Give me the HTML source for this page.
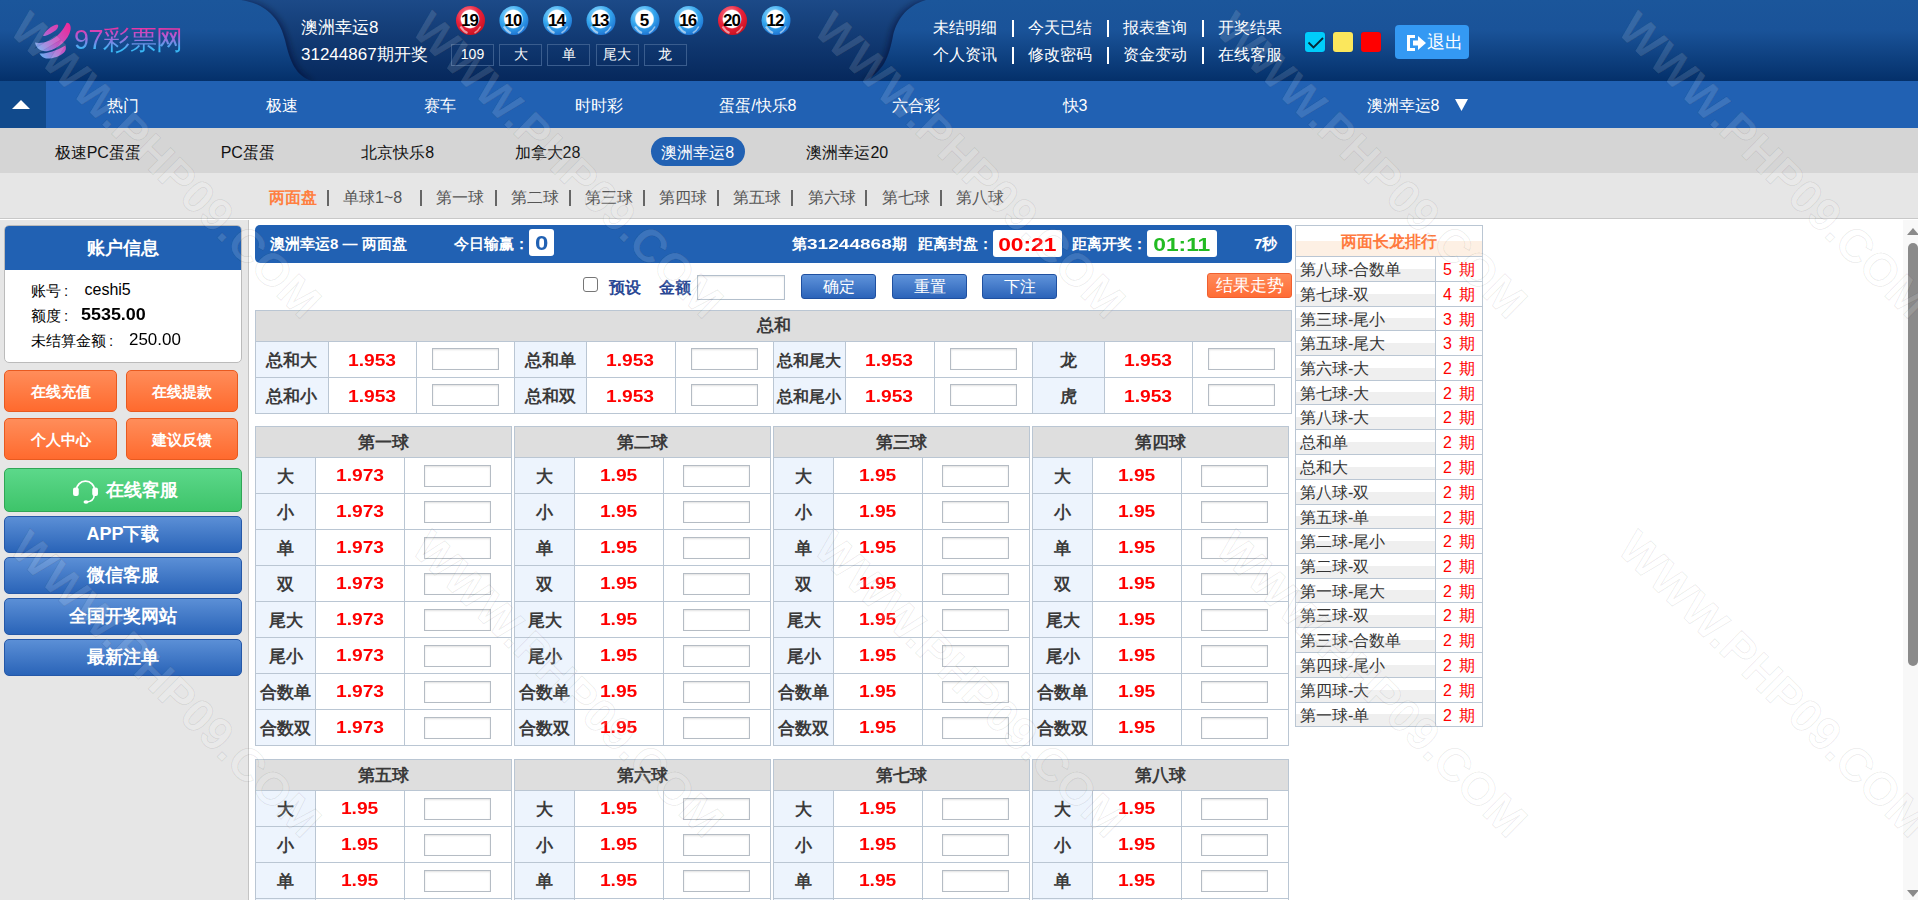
<!DOCTYPE html><html><head><meta charset="utf-8"><style>

*{box-sizing:border-box;margin:0;padding:0}
html,body{width:1918px;height:900px;overflow:hidden;background:#fff;font-family:"Liberation Sans",sans-serif;}
.a{position:absolute;white-space:nowrap}
#hdr{position:absolute;left:0;top:0;width:1918px;height:81px}
#nav{position:absolute;left:0;top:81px;width:1918px;height:47px;background:#2161b3}
#nav .up{position:absolute;left:0;top:0;width:46px;height:47px;background:#114a8c}
.nv{position:absolute;top:1px;height:47px;line-height:47px;color:#fff;font-size:16px;transform:translateX(-50%)}
#sub{position:absolute;left:0;top:128px;width:1918px;height:45px;background:#d5d5d5}
.sb{position:absolute;top:2px;height:45px;line-height:45px;color:#111;font-size:16px;transform:translateX(-50%)}
#tab{position:absolute;left:0;top:173px;width:1918px;height:46px;background:#e6e6e6;border-bottom:1px solid #c8c8c8}
.tb{position:absolute;top:1px;height:46px;line-height:48px;color:#555;font-size:16px}
#side{position:absolute;left:0;top:220px;width:249px;height:680px;background:#e6e6e6;border-right:1px solid #c4c4c4}
#main{position:absolute;left:249px;top:220px;width:1669px;height:680px;background:#fff}

</style></head><body>
<div id="hdr"><svg width="1918" height="81" viewBox="0 0 1918 81">
<defs>
<linearGradient id="gd" x1="0" y1="0" x2="0" y2="1"><stop offset="0" stop-color="#1c4a88"/><stop offset="1" stop-color="#06285c"/></linearGradient>
<linearGradient id="gl" x1="0" y1="0" x2="0" y2="1"><stop offset="0" stop-color="#1b569b"/><stop offset="0.37" stop-color="#1a5399"/><stop offset="1" stop-color="#04306a"/></linearGradient>
<linearGradient id="logo" x1="0" y1="0" x2="0" y2="1"><stop offset="0" stop-color="#f0309a"/><stop offset="0.5" stop-color="#c05ad0"/><stop offset="1" stop-color="#3ab8f5"/></linearGradient>
<linearGradient id="swirl" gradientUnits="userSpaceOnUse" x1="35" y1="52" x2="70" y2="26"><stop offset="0" stop-color="#62b6f6"/><stop offset="0.5" stop-color="#c05ac8"/><stop offset="1" stop-color="#ee2a98"/></linearGradient>
</defs>
<rect width="1918" height="81" fill="url(#gd)"/>
<filter id="blr" x="-20%" y="-20%" width="140%" height="140%"><feGaussianBlur stdDeviation="3"/></filter>
<path d="M0 0 L241 0 C268 4 280 20 285 40 C290 62 296 76 312 81 L0 81 Z" fill="rgba(0,10,40,.45)" filter="url(#blr)" transform="translate(3,0)"/>
<path d="M1918 0 L926 0 C905 6 896 22 893 36 C889 56 884 72 864 81 L1918 81 Z" fill="rgba(0,10,40,.45)" filter="url(#blr)" transform="translate(-3,0)"/>
<path d="M0 0 L241 0 C268 4 280 20 285 40 C290 62 296 76 312 81 L0 81 Z" fill="url(#gl)"/>
<path d="M1918 0 L926 0 C905 6 896 22 893 36 C889 56 884 72 864 81 L1918 81 Z" fill="url(#gl)"/>

<g>
<path d="M43 36 C44 32 52 25 57 24.5 C59 24.5 58.5 28 55.5 30.5 C51 33.5 46 36.5 43 36 Z" fill="url(#swirl)"/>
<path d="M35 42.5 C40 44 52 42 60 33 C63 30 65 26 66.5 23 C69 22 71.5 26 70.5 30 C68.5 40 58 49 48 51 C41 52.5 36 48 35 42.5 Z" fill="url(#swirl)"/>
<path d="M39.5 53.5 C46 54 56 51 65.5 45.5 C66.5 49 65.5 51 64 52.5 C60 56.5 52 59 46 58.5 C43 58 41 56 39.5 53.5 Z" fill="url(#swirl)"/>
</g>
</svg>
<div class="a" style="left:74px;top:23px;height:34px;font-size:27px;line-height:34px;letter-spacing:-0.5px;font-weight:300;background:linear-gradient(#f22f9b 0,#f22f9b 4px,#b55ad2 13px,#3ab8f6 26px);-webkit-background-clip:text;background-clip:text;color:transparent">97彩票网</div>
<div class="a" style="left:301px;top:17px;font-size:17px;line-height:22px;color:#fff">澳洲幸运8</div>
<div class="a" style="left:301px;top:44px;font-size:17px;line-height:22px;color:#fff">31244867期开奖</div>
<svg class="a" style="left:0;top:0" width="900" height="45"><defs><radialGradient id="br" cx="0.4" cy="0.3" r="0.75"><stop offset="0" stop-color="#ff8a9a"/><stop offset="0.55" stop-color="#e8203a"/><stop offset="1" stop-color="#c8101c"/></radialGradient><radialGradient id="bb" cx="0.4" cy="0.3" r="0.75"><stop offset="0" stop-color="#a8e4ff"/><stop offset="0.55" stop-color="#34a6ee"/><stop offset="1" stop-color="#1c6fd0"/></radialGradient><radialGradient id="bw" cx="0.5" cy="0.5" r="0.5"><stop offset="0.86" stop-color="#fff"/><stop offset="1" stop-color="#fff" stop-opacity="0"/></radialGradient></defs>
<circle cx="470.5" cy="20.5" r="14.5" fill="url(#br)"/>
<circle cx="470.0" cy="19.0" r="10" fill="url(#bw)"/>
<path d="M460.5 26.5 Q463.5 31.5 467.5 33.0" stroke="rgba(255,255,255,.55)" stroke-width="2.2" fill="none"/>
<path d="M480.5 26.5 Q478.5 30.5 474.5 33.0" stroke="rgba(255,255,255,.5)" stroke-width="1.6" fill="none"/>
<circle cx="513.9" cy="20.5" r="14.5" fill="url(#bb)"/>
<circle cx="513.4" cy="19.0" r="10" fill="url(#bw)"/>
<path d="M503.9 26.5 Q506.9 31.5 510.9 33.0" stroke="rgba(255,255,255,.55)" stroke-width="2.2" fill="none"/>
<path d="M523.9 26.5 Q521.9 30.5 517.9 33.0" stroke="rgba(255,255,255,.5)" stroke-width="1.6" fill="none"/>
<circle cx="557.5" cy="20.5" r="14.5" fill="url(#bb)"/>
<circle cx="557.0" cy="19.0" r="10" fill="url(#bw)"/>
<path d="M547.5 26.5 Q550.5 31.5 554.5 33.0" stroke="rgba(255,255,255,.55)" stroke-width="2.2" fill="none"/>
<path d="M567.5 26.5 Q565.5 30.5 561.5 33.0" stroke="rgba(255,255,255,.5)" stroke-width="1.6" fill="none"/>
<circle cx="601" cy="20.5" r="14.5" fill="url(#bb)"/>
<circle cx="600.5" cy="19.0" r="10" fill="url(#bw)"/>
<path d="M591 26.5 Q594 31.5 598 33.0" stroke="rgba(255,255,255,.55)" stroke-width="2.2" fill="none"/>
<path d="M611 26.5 Q609 30.5 605 33.0" stroke="rgba(255,255,255,.5)" stroke-width="1.6" fill="none"/>
<circle cx="645" cy="20.5" r="14.5" fill="url(#bb)"/>
<circle cx="644.5" cy="19.0" r="10" fill="url(#bw)"/>
<path d="M635 26.5 Q638 31.5 642 33.0" stroke="rgba(255,255,255,.55)" stroke-width="2.2" fill="none"/>
<path d="M655 26.5 Q653 30.5 649 33.0" stroke="rgba(255,255,255,.5)" stroke-width="1.6" fill="none"/>
<circle cx="688.8" cy="20.5" r="14.5" fill="url(#bb)"/>
<circle cx="688.3" cy="19.0" r="10" fill="url(#bw)"/>
<path d="M678.8 26.5 Q681.8 31.5 685.8 33.0" stroke="rgba(255,255,255,.55)" stroke-width="2.2" fill="none"/>
<path d="M698.8 26.5 Q696.8 30.5 692.8 33.0" stroke="rgba(255,255,255,.5)" stroke-width="1.6" fill="none"/>
<circle cx="732.5" cy="20.5" r="14.5" fill="url(#br)"/>
<circle cx="732.0" cy="19.0" r="10" fill="url(#bw)"/>
<path d="M722.5 26.5 Q725.5 31.5 729.5 33.0" stroke="rgba(255,255,255,.55)" stroke-width="2.2" fill="none"/>
<path d="M742.5 26.5 Q740.5 30.5 736.5 33.0" stroke="rgba(255,255,255,.5)" stroke-width="1.6" fill="none"/>
<circle cx="776" cy="20.5" r="14.5" fill="url(#bb)"/>
<circle cx="775.5" cy="19.0" r="10" fill="url(#bw)"/>
<path d="M766 26.5 Q769 31.5 773 33.0" stroke="rgba(255,255,255,.55)" stroke-width="2.2" fill="none"/>
<path d="M786 26.5 Q784 30.5 780 33.0" stroke="rgba(255,255,255,.5)" stroke-width="1.6" fill="none"/>
</svg>
<div class="a" style="left:455.5px;top:6px;width:29px;height:29px;line-height:29px;text-align:center;font-size:17px;font-weight:bold;color:#000;letter-spacing:-1px;text-indent:-1px">19</div>
<div class="a" style="left:498.9px;top:6px;width:29px;height:29px;line-height:29px;text-align:center;font-size:17px;font-weight:bold;color:#000;letter-spacing:-1px;text-indent:-1px">10</div>
<div class="a" style="left:542.5px;top:6px;width:29px;height:29px;line-height:29px;text-align:center;font-size:17px;font-weight:bold;color:#000;letter-spacing:-1px;text-indent:-1px">14</div>
<div class="a" style="left:586.0px;top:6px;width:29px;height:29px;line-height:29px;text-align:center;font-size:17px;font-weight:bold;color:#000;letter-spacing:-1px;text-indent:-1px">13</div>
<div class="a" style="left:630.0px;top:6px;width:29px;height:29px;line-height:29px;text-align:center;font-size:17px;font-weight:bold;color:#000;letter-spacing:-1px;text-indent:-1px">5</div>
<div class="a" style="left:673.8px;top:6px;width:29px;height:29px;line-height:29px;text-align:center;font-size:17px;font-weight:bold;color:#000;letter-spacing:-1px;text-indent:-1px">16</div>
<div class="a" style="left:717.5px;top:6px;width:29px;height:29px;line-height:29px;text-align:center;font-size:17px;font-weight:bold;color:#000;letter-spacing:-1px;text-indent:-1px">20</div>
<div class="a" style="left:761.0px;top:6px;width:29px;height:29px;line-height:29px;text-align:center;font-size:17px;font-weight:bold;color:#000;letter-spacing:-1px;text-indent:-1px">12</div>
<div class="a" style="left:451.0px;top:44px;width:43px;height:22px;border:1px solid #3a5d8e;color:#fff;font-size:14px;line-height:18px;text-align:center">109</div>
<div class="a" style="left:499.2px;top:44px;width:43px;height:22px;border:1px solid #3a5d8e;color:#fff;font-size:14px;line-height:18px;text-align:center">大</div>
<div class="a" style="left:547.4px;top:44px;width:43px;height:22px;border:1px solid #3a5d8e;color:#fff;font-size:14px;line-height:18px;text-align:center">单</div>
<div class="a" style="left:595.6px;top:44px;width:43px;height:22px;border:1px solid #3a5d8e;color:#fff;font-size:14px;line-height:18px;text-align:center">尾大</div>
<div class="a" style="left:643.8px;top:44px;width:43px;height:22px;border:1px solid #3a5d8e;color:#fff;font-size:14px;line-height:18px;text-align:center">龙</div>
<div class="a" style="left:933px;top:17px;font-size:16px;line-height:22px;color:#fff">未结明细</div>
<div class="a" style="left:1012px;top:20px;width:2px;height:17px;background:#fff"></div>
<div class="a" style="left:1028px;top:17px;font-size:16px;line-height:22px;color:#fff">今天已结</div>
<div class="a" style="left:1107px;top:20px;width:2px;height:17px;background:#fff"></div>
<div class="a" style="left:1123px;top:17px;font-size:16px;line-height:22px;color:#fff">报表查询</div>
<div class="a" style="left:1202px;top:20px;width:2px;height:17px;background:#fff"></div>
<div class="a" style="left:1218px;top:17px;font-size:16px;line-height:22px;color:#fff">开奖结果</div>
<div class="a" style="left:933px;top:44px;font-size:16px;line-height:22px;color:#fff">个人资讯</div>
<div class="a" style="left:1012px;top:47px;width:2px;height:17px;background:#fff"></div>
<div class="a" style="left:1028px;top:44px;font-size:16px;line-height:22px;color:#fff">修改密码</div>
<div class="a" style="left:1107px;top:47px;width:2px;height:17px;background:#fff"></div>
<div class="a" style="left:1123px;top:44px;font-size:16px;line-height:22px;color:#fff">资金变动</div>
<div class="a" style="left:1202px;top:47px;width:2px;height:17px;background:#fff"></div>
<div class="a" style="left:1218px;top:44px;font-size:16px;line-height:22px;color:#fff">在线客服</div>
<div class="a" style="left:1305px;top:32px;width:20px;height:20px;background:#00cdfb;border-radius:3px;box-shadow:0 0 1px #0a3a8a"><svg width="20" height="20" style="position:absolute;left:0;top:0"><path d="M3.5 10.5 L8.5 15.5 L18 6" stroke="#062838" stroke-width="1.8" fill="none"/></svg></div>
<div class="a" style="left:1333px;top:32px;width:20px;height:20px;background:#fbe75c;border-radius:3px;box-shadow:0 0 1px #0a3a8a"></div>
<div class="a" style="left:1361px;top:32px;width:20px;height:20px;background:#ff0000;border-radius:3px;box-shadow:0 0 1px #0a3a8a"></div>
<div class="a" style="left:1395px;top:25px;width:74px;height:34px;background:#3499f3;border-radius:4px"></div>
<svg class="a" style="left:1405px;top:33px" width="22" height="20" viewBox="0 0 22 20"><path d="M2 2 H10 V5 H5 V15 H10 V18 H2 Z" fill="#fff"/><path d="M8 7.5 H13 V3 L21 10 L13 17 V12.5 H8 Z" fill="#fff"/></svg>
<div class="a" style="left:1427px;top:31px;font-size:18px;line-height:22px;color:#fff">退出</div>
</div>
<div id="nav"><div class="up"><svg style="position:absolute;left:12px;top:19px" width="18" height="9"><path d="M0 9 L9 0 L18 9 Z" fill="#fff"/></svg></div>
<div class="nv" style="left:122.5px">热门</div>
<div class="nv" style="left:281.5px">极速</div>
<div class="nv" style="left:439.8px">赛车</div>
<div class="nv" style="left:598.8px">时时彩</div>
<div class="nv" style="left:757.8px">蛋蛋/快乐8</div>
<div class="nv" style="left:916.3px">六合彩</div>
<div class="nv" style="left:1075px">快3</div>
<div class="nv" style="left:1403px">澳洲幸运8</div>
<svg class="a" style="left:1455px;top:18px" width="13" height="12"><path d="M0 0 H13 L6.5 12 Z" fill="#fff"/></svg>
</div>
<div id="sub">
<div class="sb" style="left:97.8px">极速PC蛋蛋</div>
<div class="sb" style="left:247.8px">PC蛋蛋</div>
<div class="sb" style="left:397.8px">北京快乐8</div>
<div class="sb" style="left:547.5px">加拿大28</div>
<div class="a" style="left:651px;top:9px;width:94px;height:29px;border-radius:15px;background:#2161b3"></div>
<div class="sb" style="left:697.6px;color:#fff">澳洲幸运8</div>
<div class="sb" style="left:847.3px">澳洲幸运20</div>
</div>
<div id="tab">
<div class="tb" style="left:268.8px;color:#ff7f41;font-weight:bold">两面盘</div>
<div class="tb" style="left:343px;color:#555">单球1~8</div>
<div class="tb" style="left:436.3px;color:#555">第一球</div>
<div class="tb" style="left:510.5px;color:#555">第二球</div>
<div class="tb" style="left:585px;color:#555">第三球</div>
<div class="tb" style="left:659.3px;color:#555">第四球</div>
<div class="tb" style="left:733.3px;color:#555">第五球</div>
<div class="tb" style="left:807.5px;color:#555">第六球</div>
<div class="tb" style="left:881.8px;color:#555">第七球</div>
<div class="tb" style="left:955.5px;color:#555">第八球</div>
<div class="a" style="left:326.5px;top:17px;width:2px;height:16px;background:#666"></div>
<div class="a" style="left:420.3px;top:17px;width:2px;height:16px;background:#666"></div>
<div class="a" style="left:494.5px;top:17px;width:2px;height:16px;background:#666"></div>
<div class="a" style="left:569px;top:17px;width:2px;height:16px;background:#666"></div>
<div class="a" style="left:642.8px;top:17px;width:2px;height:16px;background:#666"></div>
<div class="a" style="left:717px;top:17px;width:2px;height:16px;background:#666"></div>
<div class="a" style="left:791px;top:17px;width:2px;height:16px;background:#666"></div>
<div class="a" style="left:865.3px;top:17px;width:2px;height:16px;background:#666"></div>
<div class="a" style="left:939.8px;top:17px;width:2px;height:16px;background:#666"></div>
</div>
<div id="side">
<div class="a" style="left:4px;top:5px;width:238px;height:138px;background:#fff;border:1px solid #bbb;border-radius:5px;overflow:hidden">
<div style="height:44px;background:#2161b3;color:#fff;font-size:18px;font-weight:bold;text-align:center;line-height:44px">账户信息</div>
<div style="position:absolute;left:26px;top:53px;font-size:15px;line-height:24.75px;color:#000">账号<br>额度<br>未结算金额</div>
<div style="position:absolute;left:59px;top:53px;font-size:15px;line-height:24.75px;color:#000">:<br>:</div>
<div style="position:absolute;left:104px;top:102.5px;font-size:15px;line-height:24.75px;color:#000">:</div>
<div style="position:absolute;left:79.5px;top:52px;font-size:16px;line-height:24.75px;color:#000">ceshi5</div>
<div style="position:absolute;left:75.5px;top:76.5px;font-size:16px;line-height:24.75px;color:#000;font-weight:bold;transform:scaleX(1.12);transform-origin:0 50%">5535.00</div>
<div style="position:absolute;left:123.5px;top:101.5px;font-size:16px;line-height:24.75px;color:#000;transform:scaleX(1.06);transform-origin:0 50%">250.00</div>
</div>
<div class="a" style="left:4px;top:150px;width:113px;height:42px;border-radius:5px;background:linear-gradient(#ff8d5a,#ff6a2e);border:1px solid #e85a20;color:#fff;font-size:15px;font-weight:bold;text-align:center;line-height:42px">在线充值</div>
<div class="a" style="left:126px;top:150px;width:112px;height:42px;border-radius:5px;background:linear-gradient(#ff8d5a,#ff6a2e);border:1px solid #e85a20;color:#fff;font-size:15px;font-weight:bold;text-align:center;line-height:42px">在线提款</div>
<div class="a" style="left:4px;top:198px;width:113px;height:42px;border-radius:5px;background:linear-gradient(#ff8d5a,#ff6a2e);border:1px solid #e85a20;color:#fff;font-size:15px;font-weight:bold;text-align:center;line-height:42px">个人中心</div>
<div class="a" style="left:126px;top:198px;width:112px;height:42px;border-radius:5px;background:linear-gradient(#ff8d5a,#ff6a2e);border:1px solid #e85a20;color:#fff;font-size:15px;font-weight:bold;text-align:center;line-height:42px">建议反馈</div>
<div class="a" style="left:4px;top:248px;width:238px;height:44px;border-radius:5px;background:linear-gradient(#5cd88a,#3ec46a);border:1px solid #2fa655;color:#fff;font-size:18px;font-weight:bold;text-align:center;line-height:42px;padding-left:37px"><svg style="position:absolute;left:67px;top:8.5px" width="27" height="26" viewBox="0 0 26 26" preserveAspectRatio="none"><path d="M4.2 12 A8.8 8.8 0 0 1 21.8 12" stroke="#fff" stroke-width="1.8" fill="none"/><rect x="1" y="9.5" width="5.5" height="8.5" rx="2" fill="#fff"/><rect x="19.5" y="9.5" width="5.5" height="8.5" rx="2" fill="#fff"/><path d="M21.5 17 Q21 23.5 14 24" stroke="#fff" stroke-width="1.6" fill="none"/><ellipse cx="13.5" cy="24" rx="2.4" ry="1.8" fill="#fff"/></svg>在线客服</div>
<div class="a" style="left:4px;top:296px;width:238px;height:37px;border-radius:5px;background:linear-gradient(#5b8fd6,#2a64b8);border:1px solid #2558a8;color:#fff;font-size:18px;font-weight:bold;text-align:center;line-height:35px">APP下载</div>
<div class="a" style="left:4px;top:337px;width:238px;height:37px;border-radius:5px;background:linear-gradient(#5b8fd6,#2a64b8);border:1px solid #2558a8;color:#fff;font-size:18px;font-weight:bold;text-align:center;line-height:35px">微信客服</div>
<div class="a" style="left:4px;top:378px;width:238px;height:37px;border-radius:5px;background:linear-gradient(#5b8fd6,#2a64b8);border:1px solid #2558a8;color:#fff;font-size:18px;font-weight:bold;text-align:center;line-height:35px">全国开奖网站</div>
<div class="a" style="left:4px;top:419px;width:238px;height:37px;border-radius:5px;background:linear-gradient(#5b8fd6,#2a64b8);border:1px solid #2558a8;color:#fff;font-size:18px;font-weight:bold;text-align:center;line-height:35px">最新注单</div>
</div>
<div id="main"></div>
<div class="a" style="left:255px;top:225px;width:1037px;height:38px;background:#2161b3;border-radius:5px"></div>
<div class="a" style="left:270px;top:233px;color:#fff;font-size:15px;font-weight:bold;line-height:22px">澳洲幸运8 — 两面盘</div>
<div class="a" style="left:454px;top:233px;color:#fff;font-size:15px;font-weight:bold;line-height:22px">今日输赢：</div>
<div class="a" style="left:529px;top:229px;width:25px;height:27px;background:#fff;border-radius:3px"></div>
<div class="a" style="left:529px;top:230px;width:25px;height:27px;line-height:27px;text-align:center;color:#2161b3;font-size:20px;font-weight:bold"><span style="display:inline-block;transform:scaleX(1.2)">0</span></div>
<div class="a" style="left:792px;top:233px;color:#fff;font-size:15px;font-weight:bold;line-height:22px">第<span style="display:inline-block;width:85px;transform:scaleX(1.27);transform-origin:0 50%">31244868</span>期</div>
<div class="a" style="left:918px;top:233px;color:#fff;font-size:15px;font-weight:bold;line-height:22px">距离封盘：</div>
<div class="a" style="left:993px;top:230px;width:69px;height:27px;background:#fff;border-radius:3px"></div>
<div class="a" style="left:993px;top:231px;width:69px;height:27px;line-height:27px;text-align:center;color:#f00;font-size:19px;font-weight:bold"><span style="display:inline-block;transform:scaleX(1.2)">00:21</span></div>
<div class="a" style="left:1072px;top:233px;color:#fff;font-size:15px;font-weight:bold;line-height:22px">距离开奖：</div>
<div class="a" style="left:1147px;top:230px;width:70px;height:27px;background:#fff;border-radius:3px"></div>
<div class="a" style="left:1147px;top:231px;width:70px;height:27px;line-height:27px;text-align:center;color:#22bb22;font-size:19px;font-weight:bold"><span style="display:inline-block;transform:scaleX(1.2)">01:11</span></div>
<div class="a" style="left:1254px;top:233px;color:#fff;font-size:15px;font-weight:bold;line-height:22px">7秒</div>
<div class="a" style="left:583px;top:277px;width:15px;height:15px;border:1px solid #767676;border-radius:3px;background:#fff"></div>
<div class="a" style="left:609px;top:277px;font-size:16px;font-weight:bold;line-height:22px;color:#2a4894">预设</div>
<div class="a" style="left:659px;top:277px;font-size:16px;font-weight:bold;line-height:22px;color:#2a4894">金额</div>
<div class="a" style="left:697px;top:275px;width:88px;height:25px;border:1px solid #b3bfcc;background:#fff;box-shadow:inset 0 1px 2px rgba(0,0,0,.1)"></div>
<div class="a" style="left:801px;top:274px;width:75px;height:25px;line-height:25px;text-align:center;background:linear-gradient(#5f93da,#2b63b9);border:1px solid #1f50a0;border-radius:3px;color:#fff;font-size:16px;line-height:24px">确定</div>
<div class="a" style="left:892px;top:274px;width:75px;height:25px;line-height:25px;text-align:center;background:linear-gradient(#5f93da,#2b63b9);border:1px solid #1f50a0;border-radius:3px;color:#fff;font-size:16px;line-height:24px">重置</div>
<div class="a" style="left:982px;top:274px;width:75px;height:25px;line-height:25px;text-align:center;background:linear-gradient(#5f93da,#2b63b9);border:1px solid #1f50a0;border-radius:3px;color:#fff;font-size:16px;line-height:24px">下注</div>
<div class="a" style="left:1207px;top:273px;width:85px;height:25px;line-height:25px;text-align:center;background:linear-gradient(#ff8b5a,#ff6c35);border:1px solid #f06030;border-radius:3px;color:#fff;font-size:17px;line-height:24px">结果走势</div>
<div class="a" style="left:255px;top:310px;width:1037px;height:104px;border:1px solid #bac6d3;background:#fff"></div>
<div class="a" style="left:256px;top:311px;width:1035px;height:30px;background:#dedede"></div>
<div class="a" style="left:255px;top:310px;width:1037px;height:31px;line-height:31px;text-align:center;color:#3a3a3a;font-size:17px;font-weight:bold">总和</div>
<div class="a" style="left:256px;top:342px;width:72px;height:71px;background:#edf4fd"></div>
<div class="a" style="left:515px;top:342px;width:71px;height:71px;background:#edf4fd"></div>
<div class="a" style="left:774px;top:342px;width:71px;height:71px;background:#edf4fd"></div>
<div class="a" style="left:1033px;top:342px;width:71px;height:71px;background:#edf4fd"></div>
<div class="a" style="left:328px;top:341px;width:1px;height:72px;background:#bac6d3"></div>
<div class="a" style="left:416px;top:341px;width:1px;height:72px;background:#bac6d3"></div>
<div class="a" style="left:514px;top:341px;width:1px;height:72px;background:#bac6d3"></div>
<div class="a" style="left:586px;top:341px;width:1px;height:72px;background:#bac6d3"></div>
<div class="a" style="left:675px;top:341px;width:1px;height:72px;background:#bac6d3"></div>
<div class="a" style="left:773px;top:341px;width:1px;height:72px;background:#bac6d3"></div>
<div class="a" style="left:845px;top:341px;width:1px;height:72px;background:#bac6d3"></div>
<div class="a" style="left:934px;top:341px;width:1px;height:72px;background:#bac6d3"></div>
<div class="a" style="left:1032px;top:341px;width:1px;height:72px;background:#bac6d3"></div>
<div class="a" style="left:1104px;top:341px;width:1px;height:72px;background:#bac6d3"></div>
<div class="a" style="left:1192px;top:341px;width:1px;height:72px;background:#bac6d3"></div>
<div class="a" style="left:255px;top:341px;width:1037px;height:1px;background:#bac6d3"></div>
<div class="a" style="left:255px;top:377px;width:1037px;height:1px;background:#bac6d3"></div>
<div class="a" style="left:255px;top:343px;width:73px;height:36px;line-height:36px;text-align:center;color:#3a3a3a;font-size:17px;font-weight:bold">总和大</div>
<div class="a" style="left:328px;top:343px;width:88px;height:36px;line-height:36px;text-align:center;color:#f00;font-size:16px;font-weight:bold"><span style="display:inline-block;transform:scaleX(1.2)">1.953</span></div>
<div class="a" style="left:432px;top:348px;width:67px;height:22px;border:1px solid #b5bcc4;background:#fff;box-shadow:inset 0 1px 2px rgba(0,0,0,.12)"></div>
<div class="a" style="left:255px;top:379px;width:73px;height:36px;line-height:36px;text-align:center;color:#3a3a3a;font-size:17px;font-weight:bold">总和小</div>
<div class="a" style="left:328px;top:379px;width:88px;height:36px;line-height:36px;text-align:center;color:#f00;font-size:16px;font-weight:bold"><span style="display:inline-block;transform:scaleX(1.2)">1.953</span></div>
<div class="a" style="left:432px;top:384px;width:67px;height:22px;border:1px solid #b5bcc4;background:#fff;box-shadow:inset 0 1px 2px rgba(0,0,0,.12)"></div>
<div class="a" style="left:514px;top:343px;width:72px;height:36px;line-height:36px;text-align:center;color:#3a3a3a;font-size:17px;font-weight:bold">总和单</div>
<div class="a" style="left:586px;top:343px;width:89px;height:36px;line-height:36px;text-align:center;color:#f00;font-size:16px;font-weight:bold"><span style="display:inline-block;transform:scaleX(1.2)">1.953</span></div>
<div class="a" style="left:691px;top:348px;width:67px;height:22px;border:1px solid #b5bcc4;background:#fff;box-shadow:inset 0 1px 2px rgba(0,0,0,.12)"></div>
<div class="a" style="left:514px;top:379px;width:72px;height:36px;line-height:36px;text-align:center;color:#3a3a3a;font-size:17px;font-weight:bold">总和双</div>
<div class="a" style="left:586px;top:379px;width:89px;height:36px;line-height:36px;text-align:center;color:#f00;font-size:16px;font-weight:bold"><span style="display:inline-block;transform:scaleX(1.2)">1.953</span></div>
<div class="a" style="left:691px;top:384px;width:67px;height:22px;border:1px solid #b5bcc4;background:#fff;box-shadow:inset 0 1px 2px rgba(0,0,0,.12)"></div>
<div class="a" style="left:773px;top:343px;width:72px;height:36px;line-height:36px;text-align:center;color:#3a3a3a;font-size:17px;font-weight:bold;font-size:16px">总和尾大</div>
<div class="a" style="left:845px;top:343px;width:89px;height:36px;line-height:36px;text-align:center;color:#f00;font-size:16px;font-weight:bold"><span style="display:inline-block;transform:scaleX(1.2)">1.953</span></div>
<div class="a" style="left:950px;top:348px;width:67px;height:22px;border:1px solid #b5bcc4;background:#fff;box-shadow:inset 0 1px 2px rgba(0,0,0,.12)"></div>
<div class="a" style="left:773px;top:379px;width:72px;height:36px;line-height:36px;text-align:center;color:#3a3a3a;font-size:17px;font-weight:bold;font-size:16px">总和尾小</div>
<div class="a" style="left:845px;top:379px;width:89px;height:36px;line-height:36px;text-align:center;color:#f00;font-size:16px;font-weight:bold"><span style="display:inline-block;transform:scaleX(1.2)">1.953</span></div>
<div class="a" style="left:950px;top:384px;width:67px;height:22px;border:1px solid #b5bcc4;background:#fff;box-shadow:inset 0 1px 2px rgba(0,0,0,.12)"></div>
<div class="a" style="left:1032px;top:343px;width:72px;height:36px;line-height:36px;text-align:center;color:#3a3a3a;font-size:17px;font-weight:bold">龙</div>
<div class="a" style="left:1104px;top:343px;width:88px;height:36px;line-height:36px;text-align:center;color:#f00;font-size:16px;font-weight:bold"><span style="display:inline-block;transform:scaleX(1.2)">1.953</span></div>
<div class="a" style="left:1208px;top:348px;width:67px;height:22px;border:1px solid #b5bcc4;background:#fff;box-shadow:inset 0 1px 2px rgba(0,0,0,.12)"></div>
<div class="a" style="left:1032px;top:379px;width:72px;height:36px;line-height:36px;text-align:center;color:#3a3a3a;font-size:17px;font-weight:bold">虎</div>
<div class="a" style="left:1104px;top:379px;width:88px;height:36px;line-height:36px;text-align:center;color:#f00;font-size:16px;font-weight:bold"><span style="display:inline-block;transform:scaleX(1.2)">1.953</span></div>
<div class="a" style="left:1208px;top:384px;width:67px;height:22px;border:1px solid #b5bcc4;background:#fff;box-shadow:inset 0 1px 2px rgba(0,0,0,.12)"></div>
<div class="a" style="left:255px;top:426px;width:257px;height:320px;border:1px solid #bac6d3;background:#fff"></div>
<div class="a" style="left:256px;top:427px;width:255px;height:31px;background:#dedede"></div>
<div class="a" style="left:255px;top:427px;width:257px;height:32px;line-height:32px;text-align:center;color:#3a3a3a;font-size:17px;font-weight:bold">第一球</div>
<div class="a" style="left:256px;top:458px;width:60px;height:287px;background:#edf4fd"></div>
<div class="a" style="left:255px;top:457px;width:257px;height:1px;background:#bac6d3"></div>
<div class="a" style="left:255px;top:458px;width:61px;height:37px;line-height:37px;text-align:center;color:#3a3a3a;font-size:17px;font-weight:bold">大</div>
<div class="a" style="left:316px;top:457px;width:88px;height:37px;line-height:37px;text-align:center;color:#f00;font-size:16px;font-weight:bold"><span style="display:inline-block;transform:scaleX(1.2)">1.973</span></div>
<div class="a" style="left:424px;top:465px;width:67px;height:22px;border:1px solid #b5bcc4;background:#fff;box-shadow:inset 0 1px 2px rgba(0,0,0,.12)"></div>
<div class="a" style="left:255px;top:493px;width:257px;height:1px;background:#bac6d3"></div>
<div class="a" style="left:255px;top:494px;width:61px;height:37px;line-height:37px;text-align:center;color:#3a3a3a;font-size:17px;font-weight:bold">小</div>
<div class="a" style="left:316px;top:493px;width:88px;height:37px;line-height:37px;text-align:center;color:#f00;font-size:16px;font-weight:bold"><span style="display:inline-block;transform:scaleX(1.2)">1.973</span></div>
<div class="a" style="left:424px;top:501px;width:67px;height:22px;border:1px solid #b5bcc4;background:#fff;box-shadow:inset 0 1px 2px rgba(0,0,0,.12)"></div>
<div class="a" style="left:255px;top:529px;width:257px;height:1px;background:#bac6d3"></div>
<div class="a" style="left:255px;top:530px;width:61px;height:37px;line-height:37px;text-align:center;color:#3a3a3a;font-size:17px;font-weight:bold">单</div>
<div class="a" style="left:316px;top:529px;width:88px;height:37px;line-height:37px;text-align:center;color:#f00;font-size:16px;font-weight:bold"><span style="display:inline-block;transform:scaleX(1.2)">1.973</span></div>
<div class="a" style="left:424px;top:537px;width:67px;height:22px;border:1px solid #b5bcc4;background:#fff;box-shadow:inset 0 1px 2px rgba(0,0,0,.12)"></div>
<div class="a" style="left:255px;top:565px;width:257px;height:1px;background:#bac6d3"></div>
<div class="a" style="left:255px;top:566px;width:61px;height:37px;line-height:37px;text-align:center;color:#3a3a3a;font-size:17px;font-weight:bold">双</div>
<div class="a" style="left:316px;top:565px;width:88px;height:37px;line-height:37px;text-align:center;color:#f00;font-size:16px;font-weight:bold"><span style="display:inline-block;transform:scaleX(1.2)">1.973</span></div>
<div class="a" style="left:424px;top:573px;width:67px;height:22px;border:1px solid #b5bcc4;background:#fff;box-shadow:inset 0 1px 2px rgba(0,0,0,.12)"></div>
<div class="a" style="left:255px;top:601px;width:257px;height:1px;background:#bac6d3"></div>
<div class="a" style="left:255px;top:602px;width:61px;height:37px;line-height:37px;text-align:center;color:#3a3a3a;font-size:17px;font-weight:bold">尾大</div>
<div class="a" style="left:316px;top:601px;width:88px;height:37px;line-height:37px;text-align:center;color:#f00;font-size:16px;font-weight:bold"><span style="display:inline-block;transform:scaleX(1.2)">1.973</span></div>
<div class="a" style="left:424px;top:609px;width:67px;height:22px;border:1px solid #b5bcc4;background:#fff;box-shadow:inset 0 1px 2px rgba(0,0,0,.12)"></div>
<div class="a" style="left:255px;top:637px;width:257px;height:1px;background:#bac6d3"></div>
<div class="a" style="left:255px;top:638px;width:61px;height:37px;line-height:37px;text-align:center;color:#3a3a3a;font-size:17px;font-weight:bold">尾小</div>
<div class="a" style="left:316px;top:637px;width:88px;height:37px;line-height:37px;text-align:center;color:#f00;font-size:16px;font-weight:bold"><span style="display:inline-block;transform:scaleX(1.2)">1.973</span></div>
<div class="a" style="left:424px;top:645px;width:67px;height:22px;border:1px solid #b5bcc4;background:#fff;box-shadow:inset 0 1px 2px rgba(0,0,0,.12)"></div>
<div class="a" style="left:255px;top:673px;width:257px;height:1px;background:#bac6d3"></div>
<div class="a" style="left:255px;top:674px;width:61px;height:37px;line-height:37px;text-align:center;color:#3a3a3a;font-size:17px;font-weight:bold">合数单</div>
<div class="a" style="left:316px;top:673px;width:88px;height:37px;line-height:37px;text-align:center;color:#f00;font-size:16px;font-weight:bold"><span style="display:inline-block;transform:scaleX(1.2)">1.973</span></div>
<div class="a" style="left:424px;top:681px;width:67px;height:22px;border:1px solid #b5bcc4;background:#fff;box-shadow:inset 0 1px 2px rgba(0,0,0,.12)"></div>
<div class="a" style="left:255px;top:709px;width:257px;height:1px;background:#bac6d3"></div>
<div class="a" style="left:255px;top:710px;width:61px;height:37px;line-height:37px;text-align:center;color:#3a3a3a;font-size:17px;font-weight:bold">合数双</div>
<div class="a" style="left:316px;top:709px;width:88px;height:37px;line-height:37px;text-align:center;color:#f00;font-size:16px;font-weight:bold"><span style="display:inline-block;transform:scaleX(1.2)">1.973</span></div>
<div class="a" style="left:424px;top:717px;width:67px;height:22px;border:1px solid #b5bcc4;background:#fff;box-shadow:inset 0 1px 2px rgba(0,0,0,.12)"></div>
<div class="a" style="left:315px;top:457px;width:1px;height:288px;background:#bac6d3"></div>
<div class="a" style="left:404px;top:457px;width:1px;height:288px;background:#bac6d3"></div>
<div class="a" style="left:514px;top:426px;width:257px;height:320px;border:1px solid #bac6d3;background:#fff"></div>
<div class="a" style="left:515px;top:427px;width:255px;height:31px;background:#dedede"></div>
<div class="a" style="left:514px;top:427px;width:257px;height:32px;line-height:32px;text-align:center;color:#3a3a3a;font-size:17px;font-weight:bold">第二球</div>
<div class="a" style="left:515px;top:458px;width:60px;height:287px;background:#edf4fd"></div>
<div class="a" style="left:514px;top:457px;width:257px;height:1px;background:#bac6d3"></div>
<div class="a" style="left:514px;top:458px;width:61px;height:37px;line-height:37px;text-align:center;color:#3a3a3a;font-size:17px;font-weight:bold">大</div>
<div class="a" style="left:575px;top:457px;width:88px;height:37px;line-height:37px;text-align:center;color:#f00;font-size:16px;font-weight:bold"><span style="display:inline-block;transform:scaleX(1.2)">1.95</span></div>
<div class="a" style="left:683px;top:465px;width:67px;height:22px;border:1px solid #b5bcc4;background:#fff;box-shadow:inset 0 1px 2px rgba(0,0,0,.12)"></div>
<div class="a" style="left:514px;top:493px;width:257px;height:1px;background:#bac6d3"></div>
<div class="a" style="left:514px;top:494px;width:61px;height:37px;line-height:37px;text-align:center;color:#3a3a3a;font-size:17px;font-weight:bold">小</div>
<div class="a" style="left:575px;top:493px;width:88px;height:37px;line-height:37px;text-align:center;color:#f00;font-size:16px;font-weight:bold"><span style="display:inline-block;transform:scaleX(1.2)">1.95</span></div>
<div class="a" style="left:683px;top:501px;width:67px;height:22px;border:1px solid #b5bcc4;background:#fff;box-shadow:inset 0 1px 2px rgba(0,0,0,.12)"></div>
<div class="a" style="left:514px;top:529px;width:257px;height:1px;background:#bac6d3"></div>
<div class="a" style="left:514px;top:530px;width:61px;height:37px;line-height:37px;text-align:center;color:#3a3a3a;font-size:17px;font-weight:bold">单</div>
<div class="a" style="left:575px;top:529px;width:88px;height:37px;line-height:37px;text-align:center;color:#f00;font-size:16px;font-weight:bold"><span style="display:inline-block;transform:scaleX(1.2)">1.95</span></div>
<div class="a" style="left:683px;top:537px;width:67px;height:22px;border:1px solid #b5bcc4;background:#fff;box-shadow:inset 0 1px 2px rgba(0,0,0,.12)"></div>
<div class="a" style="left:514px;top:565px;width:257px;height:1px;background:#bac6d3"></div>
<div class="a" style="left:514px;top:566px;width:61px;height:37px;line-height:37px;text-align:center;color:#3a3a3a;font-size:17px;font-weight:bold">双</div>
<div class="a" style="left:575px;top:565px;width:88px;height:37px;line-height:37px;text-align:center;color:#f00;font-size:16px;font-weight:bold"><span style="display:inline-block;transform:scaleX(1.2)">1.95</span></div>
<div class="a" style="left:683px;top:573px;width:67px;height:22px;border:1px solid #b5bcc4;background:#fff;box-shadow:inset 0 1px 2px rgba(0,0,0,.12)"></div>
<div class="a" style="left:514px;top:601px;width:257px;height:1px;background:#bac6d3"></div>
<div class="a" style="left:514px;top:602px;width:61px;height:37px;line-height:37px;text-align:center;color:#3a3a3a;font-size:17px;font-weight:bold">尾大</div>
<div class="a" style="left:575px;top:601px;width:88px;height:37px;line-height:37px;text-align:center;color:#f00;font-size:16px;font-weight:bold"><span style="display:inline-block;transform:scaleX(1.2)">1.95</span></div>
<div class="a" style="left:683px;top:609px;width:67px;height:22px;border:1px solid #b5bcc4;background:#fff;box-shadow:inset 0 1px 2px rgba(0,0,0,.12)"></div>
<div class="a" style="left:514px;top:637px;width:257px;height:1px;background:#bac6d3"></div>
<div class="a" style="left:514px;top:638px;width:61px;height:37px;line-height:37px;text-align:center;color:#3a3a3a;font-size:17px;font-weight:bold">尾小</div>
<div class="a" style="left:575px;top:637px;width:88px;height:37px;line-height:37px;text-align:center;color:#f00;font-size:16px;font-weight:bold"><span style="display:inline-block;transform:scaleX(1.2)">1.95</span></div>
<div class="a" style="left:683px;top:645px;width:67px;height:22px;border:1px solid #b5bcc4;background:#fff;box-shadow:inset 0 1px 2px rgba(0,0,0,.12)"></div>
<div class="a" style="left:514px;top:673px;width:257px;height:1px;background:#bac6d3"></div>
<div class="a" style="left:514px;top:674px;width:61px;height:37px;line-height:37px;text-align:center;color:#3a3a3a;font-size:17px;font-weight:bold">合数单</div>
<div class="a" style="left:575px;top:673px;width:88px;height:37px;line-height:37px;text-align:center;color:#f00;font-size:16px;font-weight:bold"><span style="display:inline-block;transform:scaleX(1.2)">1.95</span></div>
<div class="a" style="left:683px;top:681px;width:67px;height:22px;border:1px solid #b5bcc4;background:#fff;box-shadow:inset 0 1px 2px rgba(0,0,0,.12)"></div>
<div class="a" style="left:514px;top:709px;width:257px;height:1px;background:#bac6d3"></div>
<div class="a" style="left:514px;top:710px;width:61px;height:37px;line-height:37px;text-align:center;color:#3a3a3a;font-size:17px;font-weight:bold">合数双</div>
<div class="a" style="left:575px;top:709px;width:88px;height:37px;line-height:37px;text-align:center;color:#f00;font-size:16px;font-weight:bold"><span style="display:inline-block;transform:scaleX(1.2)">1.95</span></div>
<div class="a" style="left:683px;top:717px;width:67px;height:22px;border:1px solid #b5bcc4;background:#fff;box-shadow:inset 0 1px 2px rgba(0,0,0,.12)"></div>
<div class="a" style="left:574px;top:457px;width:1px;height:288px;background:#bac6d3"></div>
<div class="a" style="left:663px;top:457px;width:1px;height:288px;background:#bac6d3"></div>
<div class="a" style="left:773px;top:426px;width:257px;height:320px;border:1px solid #bac6d3;background:#fff"></div>
<div class="a" style="left:774px;top:427px;width:255px;height:31px;background:#dedede"></div>
<div class="a" style="left:773px;top:427px;width:257px;height:32px;line-height:32px;text-align:center;color:#3a3a3a;font-size:17px;font-weight:bold">第三球</div>
<div class="a" style="left:774px;top:458px;width:60px;height:287px;background:#edf4fd"></div>
<div class="a" style="left:773px;top:457px;width:257px;height:1px;background:#bac6d3"></div>
<div class="a" style="left:773px;top:458px;width:61px;height:37px;line-height:37px;text-align:center;color:#3a3a3a;font-size:17px;font-weight:bold">大</div>
<div class="a" style="left:834px;top:457px;width:88px;height:37px;line-height:37px;text-align:center;color:#f00;font-size:16px;font-weight:bold"><span style="display:inline-block;transform:scaleX(1.2)">1.95</span></div>
<div class="a" style="left:942px;top:465px;width:67px;height:22px;border:1px solid #b5bcc4;background:#fff;box-shadow:inset 0 1px 2px rgba(0,0,0,.12)"></div>
<div class="a" style="left:773px;top:493px;width:257px;height:1px;background:#bac6d3"></div>
<div class="a" style="left:773px;top:494px;width:61px;height:37px;line-height:37px;text-align:center;color:#3a3a3a;font-size:17px;font-weight:bold">小</div>
<div class="a" style="left:834px;top:493px;width:88px;height:37px;line-height:37px;text-align:center;color:#f00;font-size:16px;font-weight:bold"><span style="display:inline-block;transform:scaleX(1.2)">1.95</span></div>
<div class="a" style="left:942px;top:501px;width:67px;height:22px;border:1px solid #b5bcc4;background:#fff;box-shadow:inset 0 1px 2px rgba(0,0,0,.12)"></div>
<div class="a" style="left:773px;top:529px;width:257px;height:1px;background:#bac6d3"></div>
<div class="a" style="left:773px;top:530px;width:61px;height:37px;line-height:37px;text-align:center;color:#3a3a3a;font-size:17px;font-weight:bold">单</div>
<div class="a" style="left:834px;top:529px;width:88px;height:37px;line-height:37px;text-align:center;color:#f00;font-size:16px;font-weight:bold"><span style="display:inline-block;transform:scaleX(1.2)">1.95</span></div>
<div class="a" style="left:942px;top:537px;width:67px;height:22px;border:1px solid #b5bcc4;background:#fff;box-shadow:inset 0 1px 2px rgba(0,0,0,.12)"></div>
<div class="a" style="left:773px;top:565px;width:257px;height:1px;background:#bac6d3"></div>
<div class="a" style="left:773px;top:566px;width:61px;height:37px;line-height:37px;text-align:center;color:#3a3a3a;font-size:17px;font-weight:bold">双</div>
<div class="a" style="left:834px;top:565px;width:88px;height:37px;line-height:37px;text-align:center;color:#f00;font-size:16px;font-weight:bold"><span style="display:inline-block;transform:scaleX(1.2)">1.95</span></div>
<div class="a" style="left:942px;top:573px;width:67px;height:22px;border:1px solid #b5bcc4;background:#fff;box-shadow:inset 0 1px 2px rgba(0,0,0,.12)"></div>
<div class="a" style="left:773px;top:601px;width:257px;height:1px;background:#bac6d3"></div>
<div class="a" style="left:773px;top:602px;width:61px;height:37px;line-height:37px;text-align:center;color:#3a3a3a;font-size:17px;font-weight:bold">尾大</div>
<div class="a" style="left:834px;top:601px;width:88px;height:37px;line-height:37px;text-align:center;color:#f00;font-size:16px;font-weight:bold"><span style="display:inline-block;transform:scaleX(1.2)">1.95</span></div>
<div class="a" style="left:942px;top:609px;width:67px;height:22px;border:1px solid #b5bcc4;background:#fff;box-shadow:inset 0 1px 2px rgba(0,0,0,.12)"></div>
<div class="a" style="left:773px;top:637px;width:257px;height:1px;background:#bac6d3"></div>
<div class="a" style="left:773px;top:638px;width:61px;height:37px;line-height:37px;text-align:center;color:#3a3a3a;font-size:17px;font-weight:bold">尾小</div>
<div class="a" style="left:834px;top:637px;width:88px;height:37px;line-height:37px;text-align:center;color:#f00;font-size:16px;font-weight:bold"><span style="display:inline-block;transform:scaleX(1.2)">1.95</span></div>
<div class="a" style="left:942px;top:645px;width:67px;height:22px;border:1px solid #b5bcc4;background:#fff;box-shadow:inset 0 1px 2px rgba(0,0,0,.12)"></div>
<div class="a" style="left:773px;top:673px;width:257px;height:1px;background:#bac6d3"></div>
<div class="a" style="left:773px;top:674px;width:61px;height:37px;line-height:37px;text-align:center;color:#3a3a3a;font-size:17px;font-weight:bold">合数单</div>
<div class="a" style="left:834px;top:673px;width:88px;height:37px;line-height:37px;text-align:center;color:#f00;font-size:16px;font-weight:bold"><span style="display:inline-block;transform:scaleX(1.2)">1.95</span></div>
<div class="a" style="left:942px;top:681px;width:67px;height:22px;border:1px solid #b5bcc4;background:#fff;box-shadow:inset 0 1px 2px rgba(0,0,0,.12)"></div>
<div class="a" style="left:773px;top:709px;width:257px;height:1px;background:#bac6d3"></div>
<div class="a" style="left:773px;top:710px;width:61px;height:37px;line-height:37px;text-align:center;color:#3a3a3a;font-size:17px;font-weight:bold">合数双</div>
<div class="a" style="left:834px;top:709px;width:88px;height:37px;line-height:37px;text-align:center;color:#f00;font-size:16px;font-weight:bold"><span style="display:inline-block;transform:scaleX(1.2)">1.95</span></div>
<div class="a" style="left:942px;top:717px;width:67px;height:22px;border:1px solid #b5bcc4;background:#fff;box-shadow:inset 0 1px 2px rgba(0,0,0,.12)"></div>
<div class="a" style="left:833px;top:457px;width:1px;height:288px;background:#bac6d3"></div>
<div class="a" style="left:922px;top:457px;width:1px;height:288px;background:#bac6d3"></div>
<div class="a" style="left:1032px;top:426px;width:257px;height:320px;border:1px solid #bac6d3;background:#fff"></div>
<div class="a" style="left:1033px;top:427px;width:255px;height:31px;background:#dedede"></div>
<div class="a" style="left:1032px;top:427px;width:257px;height:32px;line-height:32px;text-align:center;color:#3a3a3a;font-size:17px;font-weight:bold">第四球</div>
<div class="a" style="left:1033px;top:458px;width:60px;height:287px;background:#edf4fd"></div>
<div class="a" style="left:1032px;top:457px;width:257px;height:1px;background:#bac6d3"></div>
<div class="a" style="left:1032px;top:458px;width:61px;height:37px;line-height:37px;text-align:center;color:#3a3a3a;font-size:17px;font-weight:bold">大</div>
<div class="a" style="left:1093px;top:457px;width:88px;height:37px;line-height:37px;text-align:center;color:#f00;font-size:16px;font-weight:bold"><span style="display:inline-block;transform:scaleX(1.2)">1.95</span></div>
<div class="a" style="left:1201px;top:465px;width:67px;height:22px;border:1px solid #b5bcc4;background:#fff;box-shadow:inset 0 1px 2px rgba(0,0,0,.12)"></div>
<div class="a" style="left:1032px;top:493px;width:257px;height:1px;background:#bac6d3"></div>
<div class="a" style="left:1032px;top:494px;width:61px;height:37px;line-height:37px;text-align:center;color:#3a3a3a;font-size:17px;font-weight:bold">小</div>
<div class="a" style="left:1093px;top:493px;width:88px;height:37px;line-height:37px;text-align:center;color:#f00;font-size:16px;font-weight:bold"><span style="display:inline-block;transform:scaleX(1.2)">1.95</span></div>
<div class="a" style="left:1201px;top:501px;width:67px;height:22px;border:1px solid #b5bcc4;background:#fff;box-shadow:inset 0 1px 2px rgba(0,0,0,.12)"></div>
<div class="a" style="left:1032px;top:529px;width:257px;height:1px;background:#bac6d3"></div>
<div class="a" style="left:1032px;top:530px;width:61px;height:37px;line-height:37px;text-align:center;color:#3a3a3a;font-size:17px;font-weight:bold">单</div>
<div class="a" style="left:1093px;top:529px;width:88px;height:37px;line-height:37px;text-align:center;color:#f00;font-size:16px;font-weight:bold"><span style="display:inline-block;transform:scaleX(1.2)">1.95</span></div>
<div class="a" style="left:1201px;top:537px;width:67px;height:22px;border:1px solid #b5bcc4;background:#fff;box-shadow:inset 0 1px 2px rgba(0,0,0,.12)"></div>
<div class="a" style="left:1032px;top:565px;width:257px;height:1px;background:#bac6d3"></div>
<div class="a" style="left:1032px;top:566px;width:61px;height:37px;line-height:37px;text-align:center;color:#3a3a3a;font-size:17px;font-weight:bold">双</div>
<div class="a" style="left:1093px;top:565px;width:88px;height:37px;line-height:37px;text-align:center;color:#f00;font-size:16px;font-weight:bold"><span style="display:inline-block;transform:scaleX(1.2)">1.95</span></div>
<div class="a" style="left:1201px;top:573px;width:67px;height:22px;border:1px solid #b5bcc4;background:#fff;box-shadow:inset 0 1px 2px rgba(0,0,0,.12)"></div>
<div class="a" style="left:1032px;top:601px;width:257px;height:1px;background:#bac6d3"></div>
<div class="a" style="left:1032px;top:602px;width:61px;height:37px;line-height:37px;text-align:center;color:#3a3a3a;font-size:17px;font-weight:bold">尾大</div>
<div class="a" style="left:1093px;top:601px;width:88px;height:37px;line-height:37px;text-align:center;color:#f00;font-size:16px;font-weight:bold"><span style="display:inline-block;transform:scaleX(1.2)">1.95</span></div>
<div class="a" style="left:1201px;top:609px;width:67px;height:22px;border:1px solid #b5bcc4;background:#fff;box-shadow:inset 0 1px 2px rgba(0,0,0,.12)"></div>
<div class="a" style="left:1032px;top:637px;width:257px;height:1px;background:#bac6d3"></div>
<div class="a" style="left:1032px;top:638px;width:61px;height:37px;line-height:37px;text-align:center;color:#3a3a3a;font-size:17px;font-weight:bold">尾小</div>
<div class="a" style="left:1093px;top:637px;width:88px;height:37px;line-height:37px;text-align:center;color:#f00;font-size:16px;font-weight:bold"><span style="display:inline-block;transform:scaleX(1.2)">1.95</span></div>
<div class="a" style="left:1201px;top:645px;width:67px;height:22px;border:1px solid #b5bcc4;background:#fff;box-shadow:inset 0 1px 2px rgba(0,0,0,.12)"></div>
<div class="a" style="left:1032px;top:673px;width:257px;height:1px;background:#bac6d3"></div>
<div class="a" style="left:1032px;top:674px;width:61px;height:37px;line-height:37px;text-align:center;color:#3a3a3a;font-size:17px;font-weight:bold">合数单</div>
<div class="a" style="left:1093px;top:673px;width:88px;height:37px;line-height:37px;text-align:center;color:#f00;font-size:16px;font-weight:bold"><span style="display:inline-block;transform:scaleX(1.2)">1.95</span></div>
<div class="a" style="left:1201px;top:681px;width:67px;height:22px;border:1px solid #b5bcc4;background:#fff;box-shadow:inset 0 1px 2px rgba(0,0,0,.12)"></div>
<div class="a" style="left:1032px;top:709px;width:257px;height:1px;background:#bac6d3"></div>
<div class="a" style="left:1032px;top:710px;width:61px;height:37px;line-height:37px;text-align:center;color:#3a3a3a;font-size:17px;font-weight:bold">合数双</div>
<div class="a" style="left:1093px;top:709px;width:88px;height:37px;line-height:37px;text-align:center;color:#f00;font-size:16px;font-weight:bold"><span style="display:inline-block;transform:scaleX(1.2)">1.95</span></div>
<div class="a" style="left:1201px;top:717px;width:67px;height:22px;border:1px solid #b5bcc4;background:#fff;box-shadow:inset 0 1px 2px rgba(0,0,0,.12)"></div>
<div class="a" style="left:1092px;top:457px;width:1px;height:288px;background:#bac6d3"></div>
<div class="a" style="left:1181px;top:457px;width:1px;height:288px;background:#bac6d3"></div>
<div class="a" style="left:255px;top:759px;width:257px;height:320px;border:1px solid #bac6d3;background:#fff"></div>
<div class="a" style="left:256px;top:760px;width:255px;height:31px;background:#dedede"></div>
<div class="a" style="left:255px;top:760px;width:257px;height:32px;line-height:32px;text-align:center;color:#3a3a3a;font-size:17px;font-weight:bold">第五球</div>
<div class="a" style="left:256px;top:791px;width:60px;height:287px;background:#edf4fd"></div>
<div class="a" style="left:255px;top:790px;width:257px;height:1px;background:#bac6d3"></div>
<div class="a" style="left:255px;top:791px;width:61px;height:37px;line-height:37px;text-align:center;color:#3a3a3a;font-size:17px;font-weight:bold">大</div>
<div class="a" style="left:316px;top:790px;width:88px;height:37px;line-height:37px;text-align:center;color:#f00;font-size:16px;font-weight:bold"><span style="display:inline-block;transform:scaleX(1.2)">1.95</span></div>
<div class="a" style="left:424px;top:798px;width:67px;height:22px;border:1px solid #b5bcc4;background:#fff;box-shadow:inset 0 1px 2px rgba(0,0,0,.12)"></div>
<div class="a" style="left:255px;top:826px;width:257px;height:1px;background:#bac6d3"></div>
<div class="a" style="left:255px;top:827px;width:61px;height:37px;line-height:37px;text-align:center;color:#3a3a3a;font-size:17px;font-weight:bold">小</div>
<div class="a" style="left:316px;top:826px;width:88px;height:37px;line-height:37px;text-align:center;color:#f00;font-size:16px;font-weight:bold"><span style="display:inline-block;transform:scaleX(1.2)">1.95</span></div>
<div class="a" style="left:424px;top:834px;width:67px;height:22px;border:1px solid #b5bcc4;background:#fff;box-shadow:inset 0 1px 2px rgba(0,0,0,.12)"></div>
<div class="a" style="left:255px;top:862px;width:257px;height:1px;background:#bac6d3"></div>
<div class="a" style="left:255px;top:863px;width:61px;height:37px;line-height:37px;text-align:center;color:#3a3a3a;font-size:17px;font-weight:bold">单</div>
<div class="a" style="left:316px;top:862px;width:88px;height:37px;line-height:37px;text-align:center;color:#f00;font-size:16px;font-weight:bold"><span style="display:inline-block;transform:scaleX(1.2)">1.95</span></div>
<div class="a" style="left:424px;top:870px;width:67px;height:22px;border:1px solid #b5bcc4;background:#fff;box-shadow:inset 0 1px 2px rgba(0,0,0,.12)"></div>
<div class="a" style="left:255px;top:898px;width:257px;height:1px;background:#bac6d3"></div>
<div class="a" style="left:255px;top:899px;width:61px;height:37px;line-height:37px;text-align:center;color:#3a3a3a;font-size:17px;font-weight:bold">双</div>
<div class="a" style="left:316px;top:898px;width:88px;height:37px;line-height:37px;text-align:center;color:#f00;font-size:16px;font-weight:bold"><span style="display:inline-block;transform:scaleX(1.2)">1.95</span></div>
<div class="a" style="left:424px;top:906px;width:67px;height:22px;border:1px solid #b5bcc4;background:#fff;box-shadow:inset 0 1px 2px rgba(0,0,0,.12)"></div>
<div class="a" style="left:255px;top:934px;width:257px;height:1px;background:#bac6d3"></div>
<div class="a" style="left:255px;top:935px;width:61px;height:37px;line-height:37px;text-align:center;color:#3a3a3a;font-size:17px;font-weight:bold">尾大</div>
<div class="a" style="left:316px;top:934px;width:88px;height:37px;line-height:37px;text-align:center;color:#f00;font-size:16px;font-weight:bold"><span style="display:inline-block;transform:scaleX(1.2)">1.95</span></div>
<div class="a" style="left:424px;top:942px;width:67px;height:22px;border:1px solid #b5bcc4;background:#fff;box-shadow:inset 0 1px 2px rgba(0,0,0,.12)"></div>
<div class="a" style="left:255px;top:970px;width:257px;height:1px;background:#bac6d3"></div>
<div class="a" style="left:255px;top:971px;width:61px;height:37px;line-height:37px;text-align:center;color:#3a3a3a;font-size:17px;font-weight:bold">尾小</div>
<div class="a" style="left:316px;top:970px;width:88px;height:37px;line-height:37px;text-align:center;color:#f00;font-size:16px;font-weight:bold"><span style="display:inline-block;transform:scaleX(1.2)">1.95</span></div>
<div class="a" style="left:424px;top:978px;width:67px;height:22px;border:1px solid #b5bcc4;background:#fff;box-shadow:inset 0 1px 2px rgba(0,0,0,.12)"></div>
<div class="a" style="left:255px;top:1006px;width:257px;height:1px;background:#bac6d3"></div>
<div class="a" style="left:255px;top:1007px;width:61px;height:37px;line-height:37px;text-align:center;color:#3a3a3a;font-size:17px;font-weight:bold">合数单</div>
<div class="a" style="left:316px;top:1006px;width:88px;height:37px;line-height:37px;text-align:center;color:#f00;font-size:16px;font-weight:bold"><span style="display:inline-block;transform:scaleX(1.2)">1.95</span></div>
<div class="a" style="left:424px;top:1014px;width:67px;height:22px;border:1px solid #b5bcc4;background:#fff;box-shadow:inset 0 1px 2px rgba(0,0,0,.12)"></div>
<div class="a" style="left:255px;top:1042px;width:257px;height:1px;background:#bac6d3"></div>
<div class="a" style="left:255px;top:1043px;width:61px;height:37px;line-height:37px;text-align:center;color:#3a3a3a;font-size:17px;font-weight:bold">合数双</div>
<div class="a" style="left:316px;top:1042px;width:88px;height:37px;line-height:37px;text-align:center;color:#f00;font-size:16px;font-weight:bold"><span style="display:inline-block;transform:scaleX(1.2)">1.95</span></div>
<div class="a" style="left:424px;top:1050px;width:67px;height:22px;border:1px solid #b5bcc4;background:#fff;box-shadow:inset 0 1px 2px rgba(0,0,0,.12)"></div>
<div class="a" style="left:315px;top:790px;width:1px;height:288px;background:#bac6d3"></div>
<div class="a" style="left:404px;top:790px;width:1px;height:288px;background:#bac6d3"></div>
<div class="a" style="left:514px;top:759px;width:257px;height:320px;border:1px solid #bac6d3;background:#fff"></div>
<div class="a" style="left:515px;top:760px;width:255px;height:31px;background:#dedede"></div>
<div class="a" style="left:514px;top:760px;width:257px;height:32px;line-height:32px;text-align:center;color:#3a3a3a;font-size:17px;font-weight:bold">第六球</div>
<div class="a" style="left:515px;top:791px;width:60px;height:287px;background:#edf4fd"></div>
<div class="a" style="left:514px;top:790px;width:257px;height:1px;background:#bac6d3"></div>
<div class="a" style="left:514px;top:791px;width:61px;height:37px;line-height:37px;text-align:center;color:#3a3a3a;font-size:17px;font-weight:bold">大</div>
<div class="a" style="left:575px;top:790px;width:88px;height:37px;line-height:37px;text-align:center;color:#f00;font-size:16px;font-weight:bold"><span style="display:inline-block;transform:scaleX(1.2)">1.95</span></div>
<div class="a" style="left:683px;top:798px;width:67px;height:22px;border:1px solid #b5bcc4;background:#fff;box-shadow:inset 0 1px 2px rgba(0,0,0,.12)"></div>
<div class="a" style="left:514px;top:826px;width:257px;height:1px;background:#bac6d3"></div>
<div class="a" style="left:514px;top:827px;width:61px;height:37px;line-height:37px;text-align:center;color:#3a3a3a;font-size:17px;font-weight:bold">小</div>
<div class="a" style="left:575px;top:826px;width:88px;height:37px;line-height:37px;text-align:center;color:#f00;font-size:16px;font-weight:bold"><span style="display:inline-block;transform:scaleX(1.2)">1.95</span></div>
<div class="a" style="left:683px;top:834px;width:67px;height:22px;border:1px solid #b5bcc4;background:#fff;box-shadow:inset 0 1px 2px rgba(0,0,0,.12)"></div>
<div class="a" style="left:514px;top:862px;width:257px;height:1px;background:#bac6d3"></div>
<div class="a" style="left:514px;top:863px;width:61px;height:37px;line-height:37px;text-align:center;color:#3a3a3a;font-size:17px;font-weight:bold">单</div>
<div class="a" style="left:575px;top:862px;width:88px;height:37px;line-height:37px;text-align:center;color:#f00;font-size:16px;font-weight:bold"><span style="display:inline-block;transform:scaleX(1.2)">1.95</span></div>
<div class="a" style="left:683px;top:870px;width:67px;height:22px;border:1px solid #b5bcc4;background:#fff;box-shadow:inset 0 1px 2px rgba(0,0,0,.12)"></div>
<div class="a" style="left:514px;top:898px;width:257px;height:1px;background:#bac6d3"></div>
<div class="a" style="left:514px;top:899px;width:61px;height:37px;line-height:37px;text-align:center;color:#3a3a3a;font-size:17px;font-weight:bold">双</div>
<div class="a" style="left:575px;top:898px;width:88px;height:37px;line-height:37px;text-align:center;color:#f00;font-size:16px;font-weight:bold"><span style="display:inline-block;transform:scaleX(1.2)">1.95</span></div>
<div class="a" style="left:683px;top:906px;width:67px;height:22px;border:1px solid #b5bcc4;background:#fff;box-shadow:inset 0 1px 2px rgba(0,0,0,.12)"></div>
<div class="a" style="left:514px;top:934px;width:257px;height:1px;background:#bac6d3"></div>
<div class="a" style="left:514px;top:935px;width:61px;height:37px;line-height:37px;text-align:center;color:#3a3a3a;font-size:17px;font-weight:bold">尾大</div>
<div class="a" style="left:575px;top:934px;width:88px;height:37px;line-height:37px;text-align:center;color:#f00;font-size:16px;font-weight:bold"><span style="display:inline-block;transform:scaleX(1.2)">1.95</span></div>
<div class="a" style="left:683px;top:942px;width:67px;height:22px;border:1px solid #b5bcc4;background:#fff;box-shadow:inset 0 1px 2px rgba(0,0,0,.12)"></div>
<div class="a" style="left:514px;top:970px;width:257px;height:1px;background:#bac6d3"></div>
<div class="a" style="left:514px;top:971px;width:61px;height:37px;line-height:37px;text-align:center;color:#3a3a3a;font-size:17px;font-weight:bold">尾小</div>
<div class="a" style="left:575px;top:970px;width:88px;height:37px;line-height:37px;text-align:center;color:#f00;font-size:16px;font-weight:bold"><span style="display:inline-block;transform:scaleX(1.2)">1.95</span></div>
<div class="a" style="left:683px;top:978px;width:67px;height:22px;border:1px solid #b5bcc4;background:#fff;box-shadow:inset 0 1px 2px rgba(0,0,0,.12)"></div>
<div class="a" style="left:514px;top:1006px;width:257px;height:1px;background:#bac6d3"></div>
<div class="a" style="left:514px;top:1007px;width:61px;height:37px;line-height:37px;text-align:center;color:#3a3a3a;font-size:17px;font-weight:bold">合数单</div>
<div class="a" style="left:575px;top:1006px;width:88px;height:37px;line-height:37px;text-align:center;color:#f00;font-size:16px;font-weight:bold"><span style="display:inline-block;transform:scaleX(1.2)">1.95</span></div>
<div class="a" style="left:683px;top:1014px;width:67px;height:22px;border:1px solid #b5bcc4;background:#fff;box-shadow:inset 0 1px 2px rgba(0,0,0,.12)"></div>
<div class="a" style="left:514px;top:1042px;width:257px;height:1px;background:#bac6d3"></div>
<div class="a" style="left:514px;top:1043px;width:61px;height:37px;line-height:37px;text-align:center;color:#3a3a3a;font-size:17px;font-weight:bold">合数双</div>
<div class="a" style="left:575px;top:1042px;width:88px;height:37px;line-height:37px;text-align:center;color:#f00;font-size:16px;font-weight:bold"><span style="display:inline-block;transform:scaleX(1.2)">1.95</span></div>
<div class="a" style="left:683px;top:1050px;width:67px;height:22px;border:1px solid #b5bcc4;background:#fff;box-shadow:inset 0 1px 2px rgba(0,0,0,.12)"></div>
<div class="a" style="left:574px;top:790px;width:1px;height:288px;background:#bac6d3"></div>
<div class="a" style="left:663px;top:790px;width:1px;height:288px;background:#bac6d3"></div>
<div class="a" style="left:773px;top:759px;width:257px;height:320px;border:1px solid #bac6d3;background:#fff"></div>
<div class="a" style="left:774px;top:760px;width:255px;height:31px;background:#dedede"></div>
<div class="a" style="left:773px;top:760px;width:257px;height:32px;line-height:32px;text-align:center;color:#3a3a3a;font-size:17px;font-weight:bold">第七球</div>
<div class="a" style="left:774px;top:791px;width:60px;height:287px;background:#edf4fd"></div>
<div class="a" style="left:773px;top:790px;width:257px;height:1px;background:#bac6d3"></div>
<div class="a" style="left:773px;top:791px;width:61px;height:37px;line-height:37px;text-align:center;color:#3a3a3a;font-size:17px;font-weight:bold">大</div>
<div class="a" style="left:834px;top:790px;width:88px;height:37px;line-height:37px;text-align:center;color:#f00;font-size:16px;font-weight:bold"><span style="display:inline-block;transform:scaleX(1.2)">1.95</span></div>
<div class="a" style="left:942px;top:798px;width:67px;height:22px;border:1px solid #b5bcc4;background:#fff;box-shadow:inset 0 1px 2px rgba(0,0,0,.12)"></div>
<div class="a" style="left:773px;top:826px;width:257px;height:1px;background:#bac6d3"></div>
<div class="a" style="left:773px;top:827px;width:61px;height:37px;line-height:37px;text-align:center;color:#3a3a3a;font-size:17px;font-weight:bold">小</div>
<div class="a" style="left:834px;top:826px;width:88px;height:37px;line-height:37px;text-align:center;color:#f00;font-size:16px;font-weight:bold"><span style="display:inline-block;transform:scaleX(1.2)">1.95</span></div>
<div class="a" style="left:942px;top:834px;width:67px;height:22px;border:1px solid #b5bcc4;background:#fff;box-shadow:inset 0 1px 2px rgba(0,0,0,.12)"></div>
<div class="a" style="left:773px;top:862px;width:257px;height:1px;background:#bac6d3"></div>
<div class="a" style="left:773px;top:863px;width:61px;height:37px;line-height:37px;text-align:center;color:#3a3a3a;font-size:17px;font-weight:bold">单</div>
<div class="a" style="left:834px;top:862px;width:88px;height:37px;line-height:37px;text-align:center;color:#f00;font-size:16px;font-weight:bold"><span style="display:inline-block;transform:scaleX(1.2)">1.95</span></div>
<div class="a" style="left:942px;top:870px;width:67px;height:22px;border:1px solid #b5bcc4;background:#fff;box-shadow:inset 0 1px 2px rgba(0,0,0,.12)"></div>
<div class="a" style="left:773px;top:898px;width:257px;height:1px;background:#bac6d3"></div>
<div class="a" style="left:773px;top:899px;width:61px;height:37px;line-height:37px;text-align:center;color:#3a3a3a;font-size:17px;font-weight:bold">双</div>
<div class="a" style="left:834px;top:898px;width:88px;height:37px;line-height:37px;text-align:center;color:#f00;font-size:16px;font-weight:bold"><span style="display:inline-block;transform:scaleX(1.2)">1.95</span></div>
<div class="a" style="left:942px;top:906px;width:67px;height:22px;border:1px solid #b5bcc4;background:#fff;box-shadow:inset 0 1px 2px rgba(0,0,0,.12)"></div>
<div class="a" style="left:773px;top:934px;width:257px;height:1px;background:#bac6d3"></div>
<div class="a" style="left:773px;top:935px;width:61px;height:37px;line-height:37px;text-align:center;color:#3a3a3a;font-size:17px;font-weight:bold">尾大</div>
<div class="a" style="left:834px;top:934px;width:88px;height:37px;line-height:37px;text-align:center;color:#f00;font-size:16px;font-weight:bold"><span style="display:inline-block;transform:scaleX(1.2)">1.95</span></div>
<div class="a" style="left:942px;top:942px;width:67px;height:22px;border:1px solid #b5bcc4;background:#fff;box-shadow:inset 0 1px 2px rgba(0,0,0,.12)"></div>
<div class="a" style="left:773px;top:970px;width:257px;height:1px;background:#bac6d3"></div>
<div class="a" style="left:773px;top:971px;width:61px;height:37px;line-height:37px;text-align:center;color:#3a3a3a;font-size:17px;font-weight:bold">尾小</div>
<div class="a" style="left:834px;top:970px;width:88px;height:37px;line-height:37px;text-align:center;color:#f00;font-size:16px;font-weight:bold"><span style="display:inline-block;transform:scaleX(1.2)">1.95</span></div>
<div class="a" style="left:942px;top:978px;width:67px;height:22px;border:1px solid #b5bcc4;background:#fff;box-shadow:inset 0 1px 2px rgba(0,0,0,.12)"></div>
<div class="a" style="left:773px;top:1006px;width:257px;height:1px;background:#bac6d3"></div>
<div class="a" style="left:773px;top:1007px;width:61px;height:37px;line-height:37px;text-align:center;color:#3a3a3a;font-size:17px;font-weight:bold">合数单</div>
<div class="a" style="left:834px;top:1006px;width:88px;height:37px;line-height:37px;text-align:center;color:#f00;font-size:16px;font-weight:bold"><span style="display:inline-block;transform:scaleX(1.2)">1.95</span></div>
<div class="a" style="left:942px;top:1014px;width:67px;height:22px;border:1px solid #b5bcc4;background:#fff;box-shadow:inset 0 1px 2px rgba(0,0,0,.12)"></div>
<div class="a" style="left:773px;top:1042px;width:257px;height:1px;background:#bac6d3"></div>
<div class="a" style="left:773px;top:1043px;width:61px;height:37px;line-height:37px;text-align:center;color:#3a3a3a;font-size:17px;font-weight:bold">合数双</div>
<div class="a" style="left:834px;top:1042px;width:88px;height:37px;line-height:37px;text-align:center;color:#f00;font-size:16px;font-weight:bold"><span style="display:inline-block;transform:scaleX(1.2)">1.95</span></div>
<div class="a" style="left:942px;top:1050px;width:67px;height:22px;border:1px solid #b5bcc4;background:#fff;box-shadow:inset 0 1px 2px rgba(0,0,0,.12)"></div>
<div class="a" style="left:833px;top:790px;width:1px;height:288px;background:#bac6d3"></div>
<div class="a" style="left:922px;top:790px;width:1px;height:288px;background:#bac6d3"></div>
<div class="a" style="left:1032px;top:759px;width:257px;height:320px;border:1px solid #bac6d3;background:#fff"></div>
<div class="a" style="left:1033px;top:760px;width:255px;height:31px;background:#dedede"></div>
<div class="a" style="left:1032px;top:760px;width:257px;height:32px;line-height:32px;text-align:center;color:#3a3a3a;font-size:17px;font-weight:bold">第八球</div>
<div class="a" style="left:1033px;top:791px;width:60px;height:287px;background:#edf4fd"></div>
<div class="a" style="left:1032px;top:790px;width:257px;height:1px;background:#bac6d3"></div>
<div class="a" style="left:1032px;top:791px;width:61px;height:37px;line-height:37px;text-align:center;color:#3a3a3a;font-size:17px;font-weight:bold">大</div>
<div class="a" style="left:1093px;top:790px;width:88px;height:37px;line-height:37px;text-align:center;color:#f00;font-size:16px;font-weight:bold"><span style="display:inline-block;transform:scaleX(1.2)">1.95</span></div>
<div class="a" style="left:1201px;top:798px;width:67px;height:22px;border:1px solid #b5bcc4;background:#fff;box-shadow:inset 0 1px 2px rgba(0,0,0,.12)"></div>
<div class="a" style="left:1032px;top:826px;width:257px;height:1px;background:#bac6d3"></div>
<div class="a" style="left:1032px;top:827px;width:61px;height:37px;line-height:37px;text-align:center;color:#3a3a3a;font-size:17px;font-weight:bold">小</div>
<div class="a" style="left:1093px;top:826px;width:88px;height:37px;line-height:37px;text-align:center;color:#f00;font-size:16px;font-weight:bold"><span style="display:inline-block;transform:scaleX(1.2)">1.95</span></div>
<div class="a" style="left:1201px;top:834px;width:67px;height:22px;border:1px solid #b5bcc4;background:#fff;box-shadow:inset 0 1px 2px rgba(0,0,0,.12)"></div>
<div class="a" style="left:1032px;top:862px;width:257px;height:1px;background:#bac6d3"></div>
<div class="a" style="left:1032px;top:863px;width:61px;height:37px;line-height:37px;text-align:center;color:#3a3a3a;font-size:17px;font-weight:bold">单</div>
<div class="a" style="left:1093px;top:862px;width:88px;height:37px;line-height:37px;text-align:center;color:#f00;font-size:16px;font-weight:bold"><span style="display:inline-block;transform:scaleX(1.2)">1.95</span></div>
<div class="a" style="left:1201px;top:870px;width:67px;height:22px;border:1px solid #b5bcc4;background:#fff;box-shadow:inset 0 1px 2px rgba(0,0,0,.12)"></div>
<div class="a" style="left:1032px;top:898px;width:257px;height:1px;background:#bac6d3"></div>
<div class="a" style="left:1032px;top:899px;width:61px;height:37px;line-height:37px;text-align:center;color:#3a3a3a;font-size:17px;font-weight:bold">双</div>
<div class="a" style="left:1093px;top:898px;width:88px;height:37px;line-height:37px;text-align:center;color:#f00;font-size:16px;font-weight:bold"><span style="display:inline-block;transform:scaleX(1.2)">1.95</span></div>
<div class="a" style="left:1201px;top:906px;width:67px;height:22px;border:1px solid #b5bcc4;background:#fff;box-shadow:inset 0 1px 2px rgba(0,0,0,.12)"></div>
<div class="a" style="left:1032px;top:934px;width:257px;height:1px;background:#bac6d3"></div>
<div class="a" style="left:1032px;top:935px;width:61px;height:37px;line-height:37px;text-align:center;color:#3a3a3a;font-size:17px;font-weight:bold">尾大</div>
<div class="a" style="left:1093px;top:934px;width:88px;height:37px;line-height:37px;text-align:center;color:#f00;font-size:16px;font-weight:bold"><span style="display:inline-block;transform:scaleX(1.2)">1.95</span></div>
<div class="a" style="left:1201px;top:942px;width:67px;height:22px;border:1px solid #b5bcc4;background:#fff;box-shadow:inset 0 1px 2px rgba(0,0,0,.12)"></div>
<div class="a" style="left:1032px;top:970px;width:257px;height:1px;background:#bac6d3"></div>
<div class="a" style="left:1032px;top:971px;width:61px;height:37px;line-height:37px;text-align:center;color:#3a3a3a;font-size:17px;font-weight:bold">尾小</div>
<div class="a" style="left:1093px;top:970px;width:88px;height:37px;line-height:37px;text-align:center;color:#f00;font-size:16px;font-weight:bold"><span style="display:inline-block;transform:scaleX(1.2)">1.95</span></div>
<div class="a" style="left:1201px;top:978px;width:67px;height:22px;border:1px solid #b5bcc4;background:#fff;box-shadow:inset 0 1px 2px rgba(0,0,0,.12)"></div>
<div class="a" style="left:1032px;top:1006px;width:257px;height:1px;background:#bac6d3"></div>
<div class="a" style="left:1032px;top:1007px;width:61px;height:37px;line-height:37px;text-align:center;color:#3a3a3a;font-size:17px;font-weight:bold">合数单</div>
<div class="a" style="left:1093px;top:1006px;width:88px;height:37px;line-height:37px;text-align:center;color:#f00;font-size:16px;font-weight:bold"><span style="display:inline-block;transform:scaleX(1.2)">1.95</span></div>
<div class="a" style="left:1201px;top:1014px;width:67px;height:22px;border:1px solid #b5bcc4;background:#fff;box-shadow:inset 0 1px 2px rgba(0,0,0,.12)"></div>
<div class="a" style="left:1032px;top:1042px;width:257px;height:1px;background:#bac6d3"></div>
<div class="a" style="left:1032px;top:1043px;width:61px;height:37px;line-height:37px;text-align:center;color:#3a3a3a;font-size:17px;font-weight:bold">合数双</div>
<div class="a" style="left:1093px;top:1042px;width:88px;height:37px;line-height:37px;text-align:center;color:#f00;font-size:16px;font-weight:bold"><span style="display:inline-block;transform:scaleX(1.2)">1.95</span></div>
<div class="a" style="left:1201px;top:1050px;width:67px;height:22px;border:1px solid #b5bcc4;background:#fff;box-shadow:inset 0 1px 2px rgba(0,0,0,.12)"></div>
<div class="a" style="left:1092px;top:790px;width:1px;height:288px;background:#bac6d3"></div>
<div class="a" style="left:1181px;top:790px;width:1px;height:288px;background:#bac6d3"></div>
<div class="a" style="left:1295px;top:225px;width:188px;height:502px;border:1px solid #bac6d3;background:#fff"></div>
<div class="a" style="left:1296px;top:226px;width:186px;height:30px;background:linear-gradient(#fff 0,#fff 50%,#fdf0e4 50%,#fdf0e4 100%)"></div>
<div class="a" style="left:1295px;top:226px;width:188px;height:32px;line-height:32px;text-align:center;color:#ff7a3e;font-size:16px;font-weight:bold">两面长龙排行</div>
<div class="a" style="left:1295px;top:256px;width:188px;height:1px;background:#bac6d3"></div>
<div class="a" style="left:1296px;top:257px;width:139px;height:24px;background:linear-gradient(#fff 0,#fff 50%,#efefef 50%,#efefef 100%)"></div>
<div class="a" style="left:1300px;top:258px;height:24px;line-height:24px;font-size:16px;color:#333">第八球-合数单</div>
<div class="a" style="left:1443px;top:258px;height:24px;line-height:24px;font-size:16px;color:#f00">5<span style="margin-left:7px">期</span></div>
<div class="a" style="left:1295px;top:281px;width:188px;height:1px;background:#bac6d3"></div>
<div class="a" style="left:1296px;top:282px;width:139px;height:24px;background:linear-gradient(#fff 0,#fff 50%,#efefef 50%,#efefef 100%)"></div>
<div class="a" style="left:1300px;top:283px;height:24px;line-height:24px;font-size:16px;color:#333">第七球-双</div>
<div class="a" style="left:1443px;top:283px;height:24px;line-height:24px;font-size:16px;color:#f00">4<span style="margin-left:7px">期</span></div>
<div class="a" style="left:1295px;top:306px;width:188px;height:1px;background:#bac6d3"></div>
<div class="a" style="left:1296px;top:307px;width:139px;height:23px;background:linear-gradient(#fff 0,#fff 50%,#efefef 50%,#efefef 100%)"></div>
<div class="a" style="left:1300px;top:308px;height:24px;line-height:24px;font-size:16px;color:#333">第三球-尾小</div>
<div class="a" style="left:1443px;top:308px;height:24px;line-height:24px;font-size:16px;color:#f00">3<span style="margin-left:7px">期</span></div>
<div class="a" style="left:1295px;top:330px;width:188px;height:1px;background:#bac6d3"></div>
<div class="a" style="left:1296px;top:331px;width:139px;height:24px;background:linear-gradient(#fff 0,#fff 50%,#efefef 50%,#efefef 100%)"></div>
<div class="a" style="left:1300px;top:332px;height:24px;line-height:24px;font-size:16px;color:#333">第五球-尾大</div>
<div class="a" style="left:1443px;top:332px;height:24px;line-height:24px;font-size:16px;color:#f00">3<span style="margin-left:7px">期</span></div>
<div class="a" style="left:1295px;top:355px;width:188px;height:1px;background:#bac6d3"></div>
<div class="a" style="left:1296px;top:356px;width:139px;height:24px;background:linear-gradient(#fff 0,#fff 50%,#efefef 50%,#efefef 100%)"></div>
<div class="a" style="left:1300px;top:357px;height:24px;line-height:24px;font-size:16px;color:#333">第六球-大</div>
<div class="a" style="left:1443px;top:357px;height:24px;line-height:24px;font-size:16px;color:#f00">2<span style="margin-left:7px">期</span></div>
<div class="a" style="left:1295px;top:380px;width:188px;height:1px;background:#bac6d3"></div>
<div class="a" style="left:1296px;top:381px;width:139px;height:23px;background:linear-gradient(#fff 0,#fff 50%,#efefef 50%,#efefef 100%)"></div>
<div class="a" style="left:1300px;top:382px;height:24px;line-height:24px;font-size:16px;color:#333">第七球-大</div>
<div class="a" style="left:1443px;top:382px;height:24px;line-height:24px;font-size:16px;color:#f00">2<span style="margin-left:7px">期</span></div>
<div class="a" style="left:1295px;top:404px;width:188px;height:1px;background:#bac6d3"></div>
<div class="a" style="left:1296px;top:405px;width:139px;height:24px;background:linear-gradient(#fff 0,#fff 50%,#efefef 50%,#efefef 100%)"></div>
<div class="a" style="left:1300px;top:406px;height:24px;line-height:24px;font-size:16px;color:#333">第八球-大</div>
<div class="a" style="left:1443px;top:406px;height:24px;line-height:24px;font-size:16px;color:#f00">2<span style="margin-left:7px">期</span></div>
<div class="a" style="left:1295px;top:429px;width:188px;height:1px;background:#bac6d3"></div>
<div class="a" style="left:1296px;top:430px;width:139px;height:24px;background:linear-gradient(#fff 0,#fff 50%,#efefef 50%,#efefef 100%)"></div>
<div class="a" style="left:1300px;top:431px;height:24px;line-height:24px;font-size:16px;color:#333">总和单</div>
<div class="a" style="left:1443px;top:431px;height:24px;line-height:24px;font-size:16px;color:#f00">2<span style="margin-left:7px">期</span></div>
<div class="a" style="left:1295px;top:454px;width:188px;height:1px;background:#bac6d3"></div>
<div class="a" style="left:1296px;top:455px;width:139px;height:24px;background:linear-gradient(#fff 0,#fff 50%,#efefef 50%,#efefef 100%)"></div>
<div class="a" style="left:1300px;top:456px;height:24px;line-height:24px;font-size:16px;color:#333">总和大</div>
<div class="a" style="left:1443px;top:456px;height:24px;line-height:24px;font-size:16px;color:#f00">2<span style="margin-left:7px">期</span></div>
<div class="a" style="left:1295px;top:479px;width:188px;height:1px;background:#bac6d3"></div>
<div class="a" style="left:1296px;top:480px;width:139px;height:24px;background:linear-gradient(#fff 0,#fff 50%,#efefef 50%,#efefef 100%)"></div>
<div class="a" style="left:1300px;top:481px;height:24px;line-height:24px;font-size:16px;color:#333">第八球-双</div>
<div class="a" style="left:1443px;top:481px;height:24px;line-height:24px;font-size:16px;color:#f00">2<span style="margin-left:7px">期</span></div>
<div class="a" style="left:1295px;top:504px;width:188px;height:1px;background:#bac6d3"></div>
<div class="a" style="left:1296px;top:505px;width:139px;height:23px;background:linear-gradient(#fff 0,#fff 50%,#efefef 50%,#efefef 100%)"></div>
<div class="a" style="left:1300px;top:506px;height:24px;line-height:24px;font-size:16px;color:#333">第五球-单</div>
<div class="a" style="left:1443px;top:506px;height:24px;line-height:24px;font-size:16px;color:#f00">2<span style="margin-left:7px">期</span></div>
<div class="a" style="left:1295px;top:528px;width:188px;height:1px;background:#bac6d3"></div>
<div class="a" style="left:1296px;top:529px;width:139px;height:24px;background:linear-gradient(#fff 0,#fff 50%,#efefef 50%,#efefef 100%)"></div>
<div class="a" style="left:1300px;top:530px;height:24px;line-height:24px;font-size:16px;color:#333">第二球-尾小</div>
<div class="a" style="left:1443px;top:530px;height:24px;line-height:24px;font-size:16px;color:#f00">2<span style="margin-left:7px">期</span></div>
<div class="a" style="left:1295px;top:553px;width:188px;height:1px;background:#bac6d3"></div>
<div class="a" style="left:1296px;top:554px;width:139px;height:24px;background:linear-gradient(#fff 0,#fff 50%,#efefef 50%,#efefef 100%)"></div>
<div class="a" style="left:1300px;top:555px;height:24px;line-height:24px;font-size:16px;color:#333">第二球-双</div>
<div class="a" style="left:1443px;top:555px;height:24px;line-height:24px;font-size:16px;color:#f00">2<span style="margin-left:7px">期</span></div>
<div class="a" style="left:1295px;top:578px;width:188px;height:1px;background:#bac6d3"></div>
<div class="a" style="left:1296px;top:579px;width:139px;height:23px;background:linear-gradient(#fff 0,#fff 50%,#efefef 50%,#efefef 100%)"></div>
<div class="a" style="left:1300px;top:580px;height:24px;line-height:24px;font-size:16px;color:#333">第一球-尾大</div>
<div class="a" style="left:1443px;top:580px;height:24px;line-height:24px;font-size:16px;color:#f00">2<span style="margin-left:7px">期</span></div>
<div class="a" style="left:1295px;top:602px;width:188px;height:1px;background:#bac6d3"></div>
<div class="a" style="left:1296px;top:603px;width:139px;height:24px;background:linear-gradient(#fff 0,#fff 50%,#efefef 50%,#efefef 100%)"></div>
<div class="a" style="left:1300px;top:604px;height:24px;line-height:24px;font-size:16px;color:#333">第三球-双</div>
<div class="a" style="left:1443px;top:604px;height:24px;line-height:24px;font-size:16px;color:#f00">2<span style="margin-left:7px">期</span></div>
<div class="a" style="left:1295px;top:627px;width:188px;height:1px;background:#bac6d3"></div>
<div class="a" style="left:1296px;top:628px;width:139px;height:24px;background:linear-gradient(#fff 0,#fff 50%,#efefef 50%,#efefef 100%)"></div>
<div class="a" style="left:1300px;top:629px;height:24px;line-height:24px;font-size:16px;color:#333">第三球-合数单</div>
<div class="a" style="left:1443px;top:629px;height:24px;line-height:24px;font-size:16px;color:#f00">2<span style="margin-left:7px">期</span></div>
<div class="a" style="left:1295px;top:652px;width:188px;height:1px;background:#bac6d3"></div>
<div class="a" style="left:1296px;top:653px;width:139px;height:24px;background:linear-gradient(#fff 0,#fff 50%,#efefef 50%,#efefef 100%)"></div>
<div class="a" style="left:1300px;top:654px;height:24px;line-height:24px;font-size:16px;color:#333">第四球-尾小</div>
<div class="a" style="left:1443px;top:654px;height:24px;line-height:24px;font-size:16px;color:#f00">2<span style="margin-left:7px">期</span></div>
<div class="a" style="left:1295px;top:677px;width:188px;height:1px;background:#bac6d3"></div>
<div class="a" style="left:1296px;top:678px;width:139px;height:24px;background:linear-gradient(#fff 0,#fff 50%,#efefef 50%,#efefef 100%)"></div>
<div class="a" style="left:1300px;top:679px;height:24px;line-height:24px;font-size:16px;color:#333">第四球-大</div>
<div class="a" style="left:1443px;top:679px;height:24px;line-height:24px;font-size:16px;color:#f00">2<span style="margin-left:7px">期</span></div>
<div class="a" style="left:1295px;top:702px;width:188px;height:1px;background:#bac6d3"></div>
<div class="a" style="left:1296px;top:703px;width:139px;height:23px;background:linear-gradient(#fff 0,#fff 50%,#efefef 50%,#efefef 100%)"></div>
<div class="a" style="left:1300px;top:704px;height:24px;line-height:24px;font-size:16px;color:#333">第一球-单</div>
<div class="a" style="left:1443px;top:704px;height:24px;line-height:24px;font-size:16px;color:#f00">2<span style="margin-left:7px">期</span></div>
<div class="a" style="left:1435px;top:256px;width:1px;height:470px;background:#bac6d3"></div>
<div class="a" style="left:1903px;top:220px;width:15px;height:680px;background:#f8f8f8"></div>
<svg class="a" style="left:1907px;top:228px" width="12" height="7"><path d="M0 7 L6 0 L12 7 Z" fill="#8a8a8a"/></svg>
<svg class="a" style="left:1907px;top:890px" width="12" height="7"><path d="M0 0 L12 0 L6 7 Z" fill="#8a8a8a"/></svg>
<div class="a" style="left:1908px;top:243px;width:10px;height:423px;background:#8a8a8a;border-radius:5px"></div>
<div class="a" style="left:35px;top:4px;font-size:46px;font-weight:bold;line-height:1;letter-spacing:0.5px;color:rgba(255,255,255,.15);-webkit-text-stroke:1px rgba(0,0,0,.08);transform-origin:0 0;transform:rotate(44.5deg);pointer-events:none">WWW.PHP09.COM</div>
<div class="a" style="left:437px;top:4px;font-size:46px;font-weight:bold;line-height:1;letter-spacing:0.5px;color:rgba(255,255,255,.15);-webkit-text-stroke:1px rgba(0,0,0,.08);transform-origin:0 0;transform:rotate(44.5deg);pointer-events:none">WWW.PHP09.COM</div>
<div class="a" style="left:839px;top:4px;font-size:46px;font-weight:bold;line-height:1;letter-spacing:0.5px;color:rgba(255,255,255,.15);-webkit-text-stroke:1px rgba(0,0,0,.08);transform-origin:0 0;transform:rotate(44.5deg);pointer-events:none">WWW.PHP09.COM</div>
<div class="a" style="left:1241px;top:4px;font-size:46px;font-weight:bold;line-height:1;letter-spacing:0.5px;color:rgba(255,255,255,.15);-webkit-text-stroke:1px rgba(0,0,0,.08);transform-origin:0 0;transform:rotate(44.5deg);pointer-events:none">WWW.PHP09.COM</div>
<div class="a" style="left:1643px;top:4px;font-size:46px;font-weight:bold;line-height:1;letter-spacing:0.5px;color:rgba(255,255,255,.15);-webkit-text-stroke:1px rgba(0,0,0,.08);transform-origin:0 0;transform:rotate(44.5deg);pointer-events:none">WWW.PHP09.COM</div>
<div class="a" style="left:35px;top:522.5px;font-size:46px;font-weight:bold;line-height:1;letter-spacing:0.5px;color:rgba(255,255,255,.15);-webkit-text-stroke:1px rgba(0,0,0,.08);transform-origin:0 0;transform:rotate(44.5deg);pointer-events:none">WWW.PHP09.COM</div>
<div class="a" style="left:437px;top:522.5px;font-size:46px;font-weight:bold;line-height:1;letter-spacing:0.5px;color:rgba(255,255,255,.15);-webkit-text-stroke:1px rgba(0,0,0,.08);transform-origin:0 0;transform:rotate(44.5deg);pointer-events:none">WWW.PHP09.COM</div>
<div class="a" style="left:839px;top:522.5px;font-size:46px;font-weight:bold;line-height:1;letter-spacing:0.5px;color:rgba(255,255,255,.15);-webkit-text-stroke:1px rgba(0,0,0,.08);transform-origin:0 0;transform:rotate(44.5deg);pointer-events:none">WWW.PHP09.COM</div>
<div class="a" style="left:1241px;top:522.5px;font-size:46px;font-weight:bold;line-height:1;letter-spacing:0.5px;color:rgba(255,255,255,.15);-webkit-text-stroke:1px rgba(0,0,0,.08);transform-origin:0 0;transform:rotate(44.5deg);pointer-events:none">WWW.PHP09.COM</div>
<div class="a" style="left:1643px;top:522.5px;font-size:46px;font-weight:bold;line-height:1;letter-spacing:0.5px;color:rgba(255,255,255,.15);-webkit-text-stroke:1px rgba(0,0,0,.08);transform-origin:0 0;transform:rotate(44.5deg);pointer-events:none">WWW.PHP09.COM</div>
</body></html>
